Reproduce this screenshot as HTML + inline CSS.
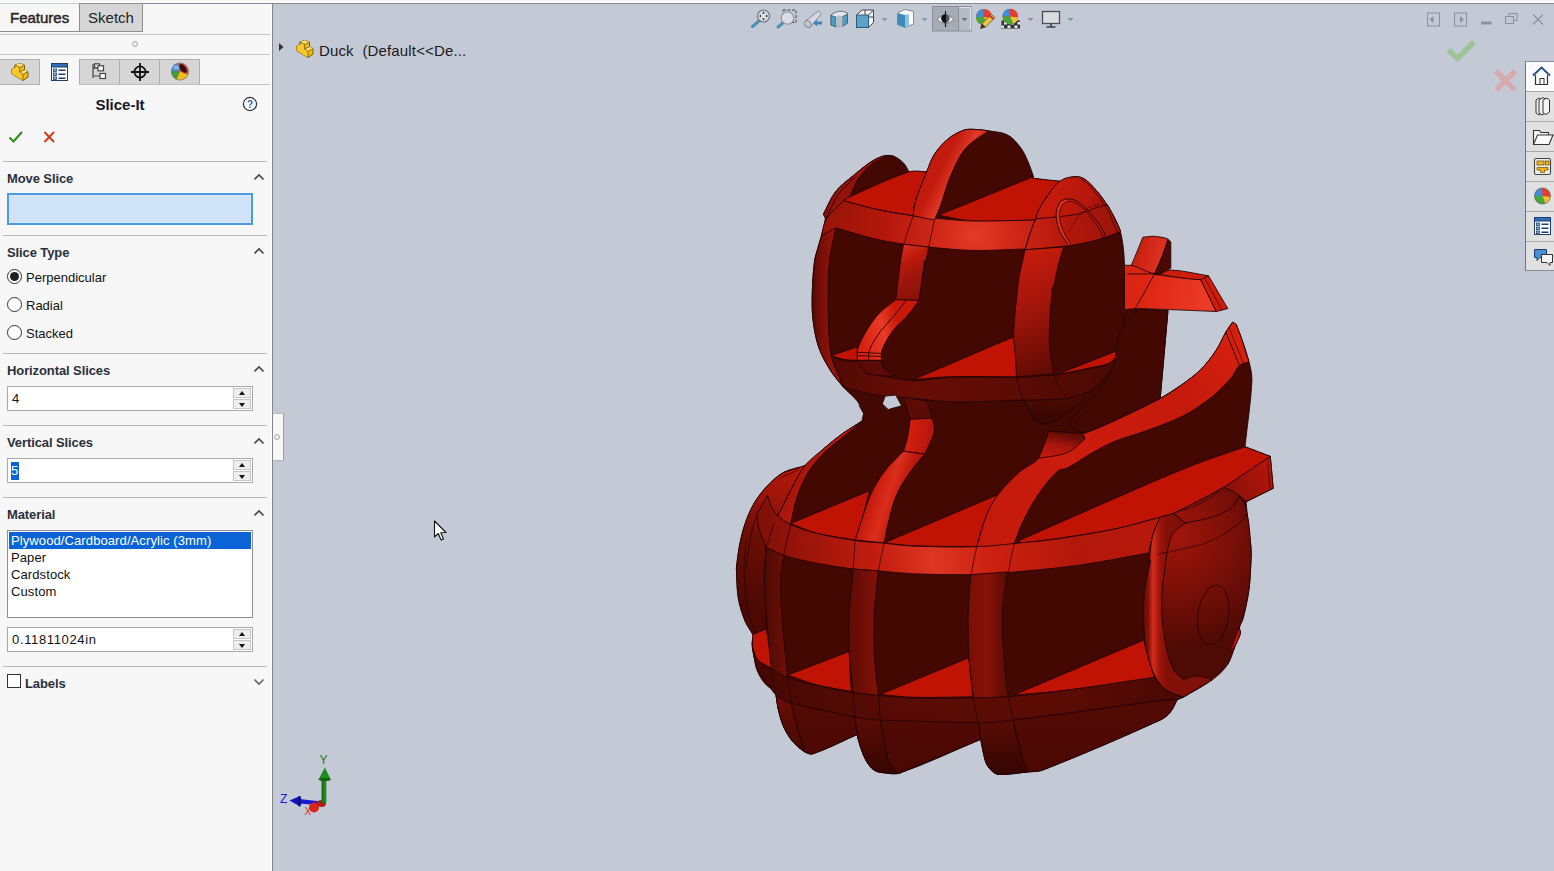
<!DOCTYPE html>
<html><head><meta charset="utf-8"><title>Slice-It</title>
<style>
*{box-sizing:border-box;margin:0;padding:0}
html,body{width:1554px;height:871px;overflow:hidden;background:#c4c9d6;font-family:"Liberation Sans","DejaVu Sans",sans-serif;font-size:13px;color:#111}
#top{position:absolute;left:0;top:0;width:1554px;height:3px;background:#f7f7f6;border-bottom:1px solid #fff}
#topline{position:absolute;left:79px;top:3px;width:1475px;height:1px;background:#85878d}
#panel{position:absolute;left:0;top:4px;width:272px;height:867px;background:#f7f7f7;border-right:1px solid #fff}
#vdiv{position:absolute;left:272px;top:3px;width:1px;height:868px;background:#83868f}
#view{position:absolute;left:273px;top:4px;width:1281px;height:867px;background:#c4c9d6}
.abs{position:absolute}
.hl{position:absolute;height:1px;background:#b9b9b9;left:3px;width:264px}
.sec{position:absolute;left:7px;font-weight:bold;font-size:13px;color:#2b2f3a;letter-spacing:-0.1px}
.chev{position:absolute;left:253px;width:12px;height:8px}
.inp{position:absolute;left:7px;width:246px;height:25px;background:#fff;border:1px solid #a9a9a9;font-size:13px;line-height:23px;padding-left:4px;color:#111}
.spin{position:absolute;right:1px;top:1px;width:18px;height:21px}
.spin i{position:absolute;left:0;width:18px;height:10px;background:#eee;border:1px solid #c6c6c6}
.spin i:after{content:"";position:absolute;left:5px;top:2px;border-left:3.5px solid transparent;border-right:3.5px solid transparent}
.spin i.u{top:0}.spin i.u:after{border-bottom:4px solid #111}
.spin i.d{top:11px}.spin i.d:after{border-top:4px solid #111;top:3px}
.radio{position:absolute;left:7px;width:15px;height:15px;border-radius:50%;border:1px solid #333;background:#fff}
.rl{position:absolute;left:26px;font-size:13px;color:#111}
</style></head><body>
<div id="top"></div><div id="topline"></div>
<div id="panel">
 <!-- tabs -->
 <div class="abs" style="left:0;top:0;width:80px;height:28px;font-size:15px;line-height:27px;padding-left:10px;color:#2a2a2a;-webkit-text-stroke:0.5px #2a2a2a">Features</div>
 <div class="abs" style="left:79px;top:-1px;width:64px;height:29px;background:#d6d6d6;border:1px solid #8e8e8e;font-size:15px;line-height:28px;text-align:center;color:#222">Sketch</div>
 <div class="abs" style="left:0;top:27px;width:143px;height:1px;background:#8e8e8e"></div>
 <div class="abs" style="left:0;top:30px;width:270px;height:1px;background:#c6c6c6"></div>
 <div class="abs" style="left:132px;top:37px;width:6px;height:6px;border-radius:50%;border:1px solid #aaa;background:#eee"></div>
 <div class="abs" style="left:0;top:50px;width:270px;height:1px;background:#c4c4c4"></div>
 <!-- icon tabs -->
 <div class="abs" style="left:0;top:55px;width:40px;height:26px;background:#d6d6d6;border:1px solid #adadad;border-left:0"></div>
 <div class="abs" style="left:79px;top:55px;width:121px;height:26px;background:#d6d6d6;border:1px solid #adadad"></div>
 <div class="abs" style="left:119px;top:55px;width:1px;height:26px;background:#adadad"></div>
 <div class="abs" style="left:159px;top:55px;width:1px;height:26px;background:#adadad"></div>
 <div class="abs" style="left:0;top:80px;width:40px;height:1px;background:#adadad"></div>
 <div class="abs" style="left:79px;top:80px;width:191px;height:1px;background:#c0c0c0"></div>
 <svg class="abs" style="left:0;top:55px" width="200" height="26" viewBox="0 0 200 26">
  <!-- part icon -->
  <g transform="translate(11,4)"><path d="M4 2 L9 0.3 L13.5 2.2 L13.5 6.8 L17 8.6 L17 14 L12 17.5 L0.6 10.6 L0.6 6 L4 4.6 Z" fill="#f0b90f" stroke="#7a5a08" stroke-width="1" stroke-linejoin="round"/><path d="M4 2 L9 0.3 L13.5 2.2 L8.6 4.4 Z" fill="#fbe27a"/><path d="M8.6 8.8 L13.5 6.8 L17 8.6 L12 11.4 Z" fill="#fbe27a"/><path d="M0.6 6 L4 4.6 L4 2 L8.6 4.4 L8.6 8.8 L12 11.4 L12 17.5 L0.6 10.6Z" fill="#f5c92e"/><path d="M4 2 L8.6 4.4 L13.5 2.2 M8.6 4.4 L8.6 8.8 L12 11.4 L17 8.6 M12 11.4 L12 17.5 M8.6 8.8 L13.5 6.8 M4 4.6 L4 2" fill="none" stroke="#7a5a08" stroke-width="0.8"/></g>
  <!-- property manager icon -->
  <g transform="translate(51,4)"><rect x="0.5" y="0.5" width="16" height="17" fill="#fff" stroke="#1d3e6e"/><rect x="0.5" y="0.5" width="16" height="3.5" fill="#2f6fb5" stroke="#1d3e6e"/><rect x="2.5" y="6" width="3" height="2.4" fill="#8ab4e0" stroke="#1d3e6e" stroke-width="0.8"/><rect x="2.5" y="10" width="3" height="2.4" fill="#8ab4e0" stroke="#1d3e6e" stroke-width="0.8"/><rect x="2.5" y="14" width="3" height="2.4" fill="#8ab4e0" stroke="#1d3e6e" stroke-width="0.8"/><path d="M7.5 7.2H14.5M7.5 11.2H14.5M7.5 15.2H14.5" stroke="#1d3e6e" stroke-width="1.4"/></g>
  <!-- config icon -->
  <g transform="translate(92,4)" fill="none" stroke="#444" stroke-width="1.2"><path d="M1 1 V15 M1 5 H6 M1 13 H8"/><rect x="2.5" y="0.8" width="5" height="4" fill="#e8e8e8"/><rect x="6" y="2.8" width="5.5" height="5" fill="#fff"/><rect x="8" y="10.5" width="5.5" height="5" fill="#fff"/></g>
  <!-- crosshair -->
  <g transform="translate(140,13)" fill="none" stroke="#111" stroke-width="1.8"><circle r="5.6"/><path d="M-9 0H9M0 -9V9"/></g>
  <!-- appearance ball -->
  <g transform="translate(180,12.5)"><circle r="8.6" fill="#e23a2c"/><path d="M0 0 L-8.600 -0.500 A8.600 8.600 0 0 1 -2 -8.400 Z" fill="#3b8fdc"/><path d="M0 0 L-8.600 -0.500 A8.600 8.600 0 0 0 -3.500 7.900 Z" fill="#3f9e38"/><path d="M0 0 L-3.500 7.900 A8.600 8.600 0 0 0 8 3.200 Z" fill="#f2bb1c"/><ellipse cx="3" cy="-3" rx="2.700" ry="5" transform="rotate(-35 3 -3)" fill="#3a0d0d"/><ellipse cx="-3.500" cy="-4" rx="3" ry="2" fill="#fff" opacity="0.35"/><circle r="8.600" fill="none" stroke="#777" stroke-width="0.700"/></g>
 </svg>
 <!-- title -->
 <div class="abs" style="left:0;top:91px;width:240px;text-align:center;font-weight:bold;font-size:15px;line-height:20px;color:#16192a">Slice-It</div>
 <svg class="abs" style="left:242px;top:92px" width="16" height="16" viewBox="0 0 16 16"><circle cx="8" cy="8" r="6.6" fill="#fff" stroke="#30333c" stroke-width="1.2"/><text x="8" y="11.6" text-anchor="middle" font-family="Liberation Sans,sans-serif" font-size="10" font-weight="bold" fill="#2f5fae">?</text></svg>
 <svg class="abs" style="left:8px;top:126px" width="52" height="14" viewBox="0 0 52 14"><path d="M1.5 7.5 L5.5 11.5 L14 2" fill="none" stroke="#2f8f1f" stroke-width="2.2"/><path d="M36.5 2 L46 12 M46 2 L36.5 12" fill="none" stroke="#d63a14" stroke-width="1.9"/></svg>
 <div class="hl" style="top:157px"></div>
 <div class="sec" style="top:167px">Move Slice</div>
 <div class="abs" style="left:7px;top:189px;width:246px;height:32px;background:#cfe2f8;border:2px solid #4a9be6;box-shadow:inset 0 0 0 1px #d9e9fa"></div>
 <div class="hl" style="top:231px"></div>
 <div class="sec" style="top:241px">Slice Type</div>
 <div class="radio" style="top:265px"><span class="abs" style="left:2px;top:2px;width:9px;height:9px;border-radius:50%;background:#222"></span></div>
 <div class="rl" style="top:266px">Perpendicular</div>
 <div class="radio" style="top:293px"></div><div class="rl" style="top:294px">Radial</div>
 <div class="radio" style="top:321px"></div><div class="rl" style="top:322px">Stacked</div>
 <div class="hl" style="top:349px"></div>
 <div class="sec" style="top:359px">Horizontal Slices</div>
 <div class="inp" style="top:382px">4<div class="spin"><i class="u"></i><i class="d"></i></div></div>
 <div class="hl" style="top:421px"></div>
 <div class="sec" style="top:431px">Vertical Slices</div>
 <div class="inp" style="top:454px"><span style="background:#0a64d8;color:#fff;display:inline-block;height:18px;line-height:18px;margin-top:2px;padding:0 1px 0 0;margin-left:-1px">5</span><div class="spin"><i class="u"></i><i class="d"></i></div></div>
 <div class="hl" style="top:493px"></div>
 <div class="sec" style="top:503px">Material</div>
 <div class="abs" style="left:7px;top:526px;width:246px;height:88px;background:#fff;border:1px solid #8f8f8f;font-size:13px;line-height:17px;color:#111;padding:1px;letter-spacing:0.1px">
   <div style="background:#0a64d8;color:#fff;padding-left:2px;height:17px">Plywood/Cardboard/Acrylic (3mm)</div>
   <div style="padding-left:2px">Paper</div><div style="padding-left:2px">Cardstock</div><div style="padding-left:2px">Custom</div>
 </div>
 <div class="inp" style="top:623px;letter-spacing:0.65px">0.11811024in<div class="spin"><i class="u"></i><i class="d"></i></div></div>
 <div class="hl" style="top:662px"></div>
 <div class="abs" style="left:7px;top:670px;width:14px;height:14px;border:1px solid #333;background:#fff"></div>
 <div class="sec" style="left:25px;top:672px">Labels</div>
 <!-- chevrons -->
 <svg class="chev" style="top:169px" viewBox="0 0 12 8"><path d="M1.5 6.5 L6 2 L10.5 6.5" fill="none" stroke="#444" stroke-width="1.6"/></svg>
 <svg class="chev" style="top:243px" viewBox="0 0 12 8"><path d="M1.5 6.5 L6 2 L10.5 6.5" fill="none" stroke="#444" stroke-width="1.6"/></svg>
 <svg class="chev" style="top:361px" viewBox="0 0 12 8"><path d="M1.5 6.5 L6 2 L10.5 6.5" fill="none" stroke="#444" stroke-width="1.6"/></svg>
 <svg class="chev" style="top:433px" viewBox="0 0 12 8"><path d="M1.5 6.5 L6 2 L10.5 6.5" fill="none" stroke="#444" stroke-width="1.6"/></svg>
 <svg class="chev" style="top:505px" viewBox="0 0 12 8"><path d="M1.5 6.5 L6 2 L10.5 6.5" fill="none" stroke="#444" stroke-width="1.6"/></svg>
 <svg class="chev" style="top:674px" viewBox="0 0 12 8"><path d="M1.5 1.5 L6 6 L10.5 1.5" fill="none" stroke="#666" stroke-width="1.6"/></svg>
</div>
<div id="vdiv"></div>
<div id="view"></div>
<svg id="duck" style="position:absolute;left:0;top:0" width="1554" height="871" viewBox="0 0 1554 871"><defs><clipPath id="cpBody"><path d="M859.0 405.8L863.8 412.5L861.9 421.2C855.8 425.1 849.5 428.6 843.6 432.8C836.9 437.6 830.5 442.9 824.2 448.3C817.6 453.9 812.3 461.2 804.9 465.6C798.5 469.4 790.3 468.9 783.7 472.4C777.9 475.5 772.9 480.2 768.3 484.9C763.2 490.2 758.5 496.0 754.7 502.3C750.7 509.0 747.7 516.2 745.1 523.6C742.5 531.1 740.8 538.9 739.3 546.7C737.9 553.7 737.3 560.9 736.4 568.0C736.4 568.3 736.4 568.7 736.4 569.0C737.0 578.6 736.7 588.4 738.3 597.9C739.6 605.8 742.1 613.6 745.1 621.1C747.0 625.9 751.3 629.6 752.8 634.6C753.7 637.7 751.7 641.0 751.9 644.2C752.1 648.1 753.0 652.0 753.8 655.8C754.9 661.0 755.7 666.3 757.6 671.3C759.2 675.5 761.5 679.5 764.4 682.9C767.7 686.7 772.1 689.3 776.0 692.5C776.0 693.0 775.9 693.6 776.0 694.1C776.6 698.6 776.9 703.2 777.9 707.6C779.4 714.1 781.0 720.8 783.7 726.9C786.2 732.4 789.5 737.7 793.4 742.3C796.6 746.1 800.6 749.4 804.9 752.0C807.2 753.4 810.2 754.7 812.7 753.9C828.0 748.8 842.3 741.0 857.1 734.6C858.4 739.1 859.3 743.7 860.9 748.1C862.5 752.7 864.2 757.4 866.7 761.6C868.7 764.9 871.1 768.2 874.4 770.3C877.2 772.1 880.8 772.4 884.1 772.8C889.2 773.4 894.6 774.9 899.5 773.2C927.2 763.6 953.6 750.7 980.6 739.4C981.9 744.9 982.8 750.5 984.5 755.8C986.0 760.5 987.4 765.4 990.3 769.3C992.1 771.8 995.4 772.6 998.0 774.2C998.2 774.3 998.4 774.5 998.6 774.5C1008.3 773.8 1017.9 773.0 1027.6 772.0C1032.8 771.5 1038.2 771.9 1043.0 770.0C1082.7 754.4 1121.9 737.5 1160.8 719.8C1164.5 718.1 1167.8 715.3 1170.4 712.1C1173.4 708.4 1174.9 703.8 1177.2 699.6C1179.4 698.6 1181.8 698.0 1183.9 696.7C1193.1 691.2 1202.7 686.1 1211.0 679.3C1217.7 673.8 1222.5 666.4 1228.3 660.0L1227.8 664.2C1230.4 657.8 1232.9 651.3 1235.5 644.9C1237.1 641.1 1239.4 637.5 1240.3 633.4C1240.7 631.5 1239.0 629.5 1239.4 627.6C1240.0 624.2 1242.4 621.3 1243.2 617.9C1245.6 608.4 1247.7 598.7 1249.0 589.0C1250.3 579.4 1250.5 569.7 1251.0 560.0C1251.2 556.0 1251.3 552.1 1251.0 548.1C1250.0 536.5 1248.3 525.0 1247.1 513.4C1246.7 509.5 1246.4 505.7 1246.1 501.8L1273.2 488.3L1270.3 456.4L1245.2 446.8C1245.2 446.1 1245.1 445.5 1245.2 444.8C1247.4 423.6 1250.9 402.4 1251.9 381.1C1252.2 374.6 1250.7 368.1 1249.0 361.8C1245.6 349.3 1241.4 337.0 1236.5 325.1C1235.9 323.6 1233.9 323.2 1232.6 322.2C1230.4 325.4 1227.9 328.5 1225.9 331.9C1222.4 337.9 1220.0 344.5 1216.2 350.2C1211.6 357.0 1206.6 363.7 1200.8 369.5C1195.0 375.3 1188.2 380.1 1181.5 384.9C1174.6 389.8 1167.3 394.0 1160.2 398.5L1168.0 310.6C1158.3 309.9 1148.7 308.8 1139.0 308.6C1134.2 308.5 1129.3 309.3 1124.5 309.6C1122.9 317.3 1121.2 325.1 1119.7 332.8C1117.7 343.1 1117.7 353.9 1113.9 363.7C1109.8 374.2 1103.3 383.7 1096.5 392.7C1091.0 399.9 1083.3 405.3 1077.2 412.0C1070.4 419.4 1064.3 427.4 1057.9 435.1C1014.2 423.7 970.6 411.6 926.7 400.9C919.1 399.1 911.3 398.6 903.6 397.5L901.6 405.8C897.1 407.1 892.7 408.8 888.1 409.6C879.8 411.0 871.4 411.5 863.0 412.5L859.0 405.8Z"/></clipPath><linearGradient id="gHL" gradientUnits="userSpaceOnUse" x1="812" y1="300" x2="832" y2="300"><stop offset="0" stop-color="#560a04"/><stop offset="0.6" stop-color="#7e1008"/><stop offset="1" stop-color="#92130a"/></linearGradient><linearGradient id="gB3t" gradientUnits="userSpaceOnUse" x1="1050" y1="200" x2="1120" y2="230"><stop offset="0" stop-color="#c41a0c"/><stop offset="0.5" stop-color="#b5160b"/><stop offset="1" stop-color="#7a0f07"/></linearGradient><radialGradient id="gH1" gradientUnits="userSpaceOnUse" cx="975" cy="235" r="150"><stop offset="0" stop-color="#e33b29"/><stop offset="0.25" stop-color="#d02818"/><stop offset="0.6" stop-color="#b5170b"/><stop offset="1" stop-color="#98140a"/></radialGradient><linearGradient id="gB2h" gradientUnits="userSpaceOnUse" x1="925" y1="200" x2="955" y2="215"><stop offset="0" stop-color="#c21a0c"/><stop offset="0.5" stop-color="#e23a28"/><stop offset="1" stop-color="#c41a0c"/></linearGradient><linearGradient id="gB2m" gradientUnits="userSpaceOnUse" x1="900" y1="246" x2="926" y2="296"><stop offset="0" stop-color="#d8301e"/><stop offset="0.3" stop-color="#bc190c"/><stop offset="0.6" stop-color="#9e150a"/><stop offset="1" stop-color="#861108"/></linearGradient><linearGradient id="gBk" gradientUnits="userSpaceOnUse" x1="860" y1="340" x2="900" y2="330"><stop offset="0" stop-color="#d8200f"/><stop offset="0.6" stop-color="#e83a26"/><stop offset="1" stop-color="#c81808"/></linearGradient><linearGradient id="gB3h" gradientUnits="userSpaceOnUse" x1="1020" y1="255" x2="1062" y2="365"><stop offset="0" stop-color="#c41b0c"/><stop offset="0.4" stop-color="#a8160b"/><stop offset="0.8" stop-color="#7a0f07"/><stop offset="1" stop-color="#620c05"/></linearGradient><linearGradient id="gH2" gradientUnits="userSpaceOnUse" x1="830" y1="380" x2="1110" y2="380"><stop offset="0" stop-color="#520a04"/><stop offset="0.3" stop-color="#660d05"/><stop offset="0.6" stop-color="#5e0c05"/><stop offset="1" stop-color="#4a0903"/></linearGradient><linearGradient id="gCap" gradientUnits="userSpaceOnUse" x1="1040" y1="400" x2="1040" y2="425"><stop offset="0" stop-color="#4a0a04"/><stop offset="1" stop-color="#330503"/></linearGradient><linearGradient id="gTv" gradientUnits="userSpaceOnUse" x1="1130" y1="250" x2="1165" y2="260"><stop offset="0" stop-color="#c41a0c"/><stop offset="1" stop-color="#e03523"/></linearGradient><linearGradient id="gTh" gradientUnits="userSpaceOnUse" x1="1140" y1="290" x2="1220" y2="300"><stop offset="0" stop-color="#dc2412"/><stop offset="1" stop-color="#ee3f2a"/></linearGradient><linearGradient id="gWL" gradientUnits="userSpaceOnUse" x1="792" y1="462" x2="738" y2="600"><stop offset="0" stop-color="#b8180b"/><stop offset="0.3" stop-color="#9a1409"/><stop offset="0.55" stop-color="#6c0e06"/><stop offset="1" stop-color="#4c0903"/></linearGradient><linearGradient id="gB1a" gradientUnits="userSpaceOnUse" x1="780" y1="520" x2="800" y2="530"><stop offset="0" stop-color="#a8160b"/><stop offset="1" stop-color="#c41a0c"/></linearGradient><linearGradient id="gN1" gradientUnits="userSpaceOnUse" x1="905" y1="440" x2="930" y2="445"><stop offset="0" stop-color="#d8200f"/><stop offset="1" stop-color="#b5160b"/></linearGradient><linearGradient id="gB2a" gradientUnits="userSpaceOnUse" x1="870" y1="500" x2="900" y2="510"><stop offset="0" stop-color="#c41a0c"/><stop offset="0.5" stop-color="#dc2e1c"/><stop offset="1" stop-color="#b5160b"/></linearGradient><linearGradient id="gSl" gradientUnits="userSpaceOnUse" x1="1230" y1="490" x2="1272" y2="470"><stop offset="0" stop-color="#8a1108"/><stop offset="1" stop-color="#b5160b"/></linearGradient><linearGradient id="gB3a" gradientUnits="userSpaceOnUse" x1="1010" y1="520" x2="1240" y2="330"><stop offset="0" stop-color="#c41a0c"/><stop offset="0.3" stop-color="#cc1c0d"/><stop offset="0.7" stop-color="#c41a0c"/><stop offset="1" stop-color="#d8200f"/></linearGradient><linearGradient id="gFil" gradientUnits="userSpaceOnUse" x1="1060" y1="432" x2="1055" y2="458"><stop offset="0" stop-color="#5a0b05"/><stop offset="0.5" stop-color="#a5150a"/><stop offset="1" stop-color="#c41a0c"/></linearGradient><linearGradient id="gH3" gradientUnits="userSpaceOnUse" x1="755" y1="560" x2="1160" y2="540"><stop offset="0" stop-color="#7a0f07"/><stop offset="0.12" stop-color="#9a140a"/><stop offset="0.3" stop-color="#c21d0e"/><stop offset="0.44" stop-color="#de3624"/><stop offset="0.58" stop-color="#cc2010"/><stop offset="0.8" stop-color="#b2170b"/><stop offset="1" stop-color="#b8180b"/></linearGradient><radialGradient id="gWR" gradientUnits="userSpaceOnUse" cx="1175" cy="535" r="115"><stop offset="0" stop-color="#a2150a"/><stop offset="0.45" stop-color="#7e1008"/><stop offset="1" stop-color="#4e0a04"/></radialGradient><linearGradient id="gWRr" gradientUnits="userSpaceOnUse" x1="1148" y1="560" x2="1168" y2="560"><stop offset="0" stop-color="#7a0f07"/><stop offset="0.25" stop-color="#d42a1a"/><stop offset="0.6" stop-color="#9a1409"/><stop offset="1" stop-color="#801008"/></linearGradient><linearGradient id="gB1b" gradientUnits="userSpaceOnUse" x1="765" y1="620" x2="785" y2="620"><stop offset="0" stop-color="#4e0a04"/><stop offset="1" stop-color="#6c0e06"/></linearGradient><linearGradient id="gB2b" gradientUnits="userSpaceOnUse" x1="850" y1="600" x2="878" y2="600"><stop offset="0" stop-color="#5e0c05"/><stop offset="1" stop-color="#841108"/></linearGradient><linearGradient id="gB3b" gradientUnits="userSpaceOnUse" x1="970" y1="600" x2="1005" y2="600"><stop offset="0" stop-color="#7a0f07"/><stop offset="0.5" stop-color="#8a1108"/><stop offset="1" stop-color="#5e0c05"/></linearGradient><linearGradient id="gLeg" gradientUnits="userSpaceOnUse" x1="0" y1="700" x2="0" y2="774"><stop offset="0" stop-color="#6a0d06"/><stop offset="0.5" stop-color="#540b04"/><stop offset="1" stop-color="#3a0602"/></linearGradient><linearGradient id="gH4" gradientUnits="userSpaceOnUse" x1="760" y1="700" x2="1180" y2="700"><stop offset="0" stop-color="#460803"/><stop offset="0.3" stop-color="#5a0b05"/><stop offset="0.7" stop-color="#5e0c05"/><stop offset="1" stop-color="#4a0803"/></linearGradient><linearGradient id="gShade" gradientUnits="userSpaceOnUse" x1="0" y1="690" x2="0" y2="775"><stop offset="0" stop-color="#200000" stop-opacity="0"/><stop offset="1" stop-color="#200000" stop-opacity="0.18"/></linearGradient></defs>
<path d="M859.0 405.8L863.8 412.5L861.9 421.2C855.8 425.1 849.5 428.6 843.6 432.8C836.9 437.6 830.5 442.9 824.2 448.3C817.6 453.9 812.3 461.2 804.9 465.6C798.5 469.4 790.3 468.9 783.7 472.4C777.9 475.5 772.9 480.2 768.3 484.9C763.2 490.2 758.5 496.0 754.7 502.3C750.7 509.0 747.7 516.2 745.1 523.6C742.5 531.1 740.8 538.9 739.3 546.7C737.9 553.7 737.3 560.9 736.4 568.0C736.4 568.3 736.4 568.7 736.4 569.0C737.0 578.6 736.7 588.4 738.3 597.9C739.6 605.8 742.1 613.6 745.1 621.1C747.0 625.9 751.3 629.6 752.8 634.6C753.7 637.7 751.7 641.0 751.9 644.2C752.1 648.1 753.0 652.0 753.8 655.8C754.9 661.0 755.7 666.3 757.6 671.3C759.2 675.5 761.5 679.5 764.4 682.9C767.7 686.7 772.1 689.3 776.0 692.5C776.0 693.0 775.9 693.6 776.0 694.1C776.6 698.6 776.9 703.2 777.9 707.6C779.4 714.1 781.0 720.8 783.7 726.9C786.2 732.4 789.5 737.7 793.4 742.3C796.6 746.1 800.6 749.4 804.9 752.0C807.2 753.4 810.2 754.7 812.7 753.9C828.0 748.8 842.3 741.0 857.1 734.6C858.4 739.1 859.3 743.7 860.9 748.1C862.5 752.7 864.2 757.4 866.7 761.6C868.7 764.9 871.1 768.2 874.4 770.3C877.2 772.1 880.8 772.4 884.1 772.8C889.2 773.4 894.6 774.9 899.5 773.2C927.2 763.6 953.6 750.7 980.6 739.4C981.9 744.9 982.8 750.5 984.5 755.8C986.0 760.5 987.4 765.4 990.3 769.3C992.1 771.8 995.4 772.6 998.0 774.2C998.2 774.3 998.4 774.5 998.6 774.5C1008.3 773.8 1017.9 773.0 1027.6 772.0C1032.8 771.5 1038.2 771.9 1043.0 770.0C1082.7 754.4 1121.9 737.5 1160.8 719.8C1164.5 718.1 1167.8 715.3 1170.4 712.1C1173.4 708.4 1174.9 703.8 1177.2 699.6C1179.4 698.6 1181.8 698.0 1183.9 696.7C1193.1 691.2 1202.7 686.1 1211.0 679.3C1217.7 673.8 1222.5 666.4 1228.3 660.0L1227.8 664.2C1230.4 657.8 1232.9 651.3 1235.5 644.9C1237.1 641.1 1239.4 637.5 1240.3 633.4C1240.7 631.5 1239.0 629.5 1239.4 627.6C1240.0 624.2 1242.4 621.3 1243.2 617.9C1245.6 608.4 1247.7 598.7 1249.0 589.0C1250.3 579.4 1250.5 569.7 1251.0 560.0C1251.2 556.0 1251.3 552.1 1251.0 548.1C1250.0 536.5 1248.3 525.0 1247.1 513.4C1246.7 509.5 1246.4 505.7 1246.1 501.8L1273.2 488.3L1270.3 456.4L1245.2 446.8C1245.2 446.1 1245.1 445.5 1245.2 444.8C1247.4 423.6 1250.9 402.4 1251.9 381.1C1252.2 374.6 1250.7 368.1 1249.0 361.8C1245.6 349.3 1241.4 337.0 1236.5 325.1C1235.9 323.6 1233.9 323.2 1232.6 322.2C1230.4 325.4 1227.9 328.5 1225.9 331.9C1222.4 337.9 1220.0 344.5 1216.2 350.2C1211.6 357.0 1206.6 363.7 1200.8 369.5C1195.0 375.3 1188.2 380.1 1181.5 384.9C1174.6 389.8 1167.3 394.0 1160.2 398.5L1168.0 310.6C1158.3 309.9 1148.7 308.8 1139.0 308.6C1134.2 308.5 1129.3 309.3 1124.5 309.6C1122.9 317.3 1121.2 325.1 1119.7 332.8C1117.7 343.1 1117.7 353.9 1113.9 363.7C1109.8 374.2 1103.3 383.7 1096.5 392.7C1091.0 399.9 1083.3 405.3 1077.2 412.0C1070.4 419.4 1064.3 427.4 1057.9 435.1C1014.2 423.7 970.6 411.6 926.7 400.9C919.1 399.1 911.3 398.6 903.6 397.5L901.6 405.8C897.1 407.1 892.7 408.8 888.1 409.6C879.8 411.0 871.4 411.5 863.0 412.5L859.0 405.8Z" fill="#430802"/>
<path d="M863.0 412.5C861.1 408.6 859.8 404.3 857.2 400.9C853.3 395.9 847.9 392.2 843.7 387.4C838.9 381.9 834.1 376.2 830.2 370.0C825.7 362.7 821.3 355.1 818.6 346.9C815.5 337.5 813.8 327.7 812.8 317.9C811.8 308.3 812.1 298.6 812.4 289.0C812.7 279.3 813.4 269.6 814.7 260.0C815.2 256.2 816.6 252.7 817.6 249.0C818.9 244.5 820.3 240.0 821.5 235.5C822.9 230.1 824.9 224.7 825.4 219.1C825.6 217.3 824.1 215.8 823.4 214.2C827.6 206.5 830.6 198.0 836.0 191.1C840.8 185.0 847.4 180.6 853.4 175.6C859.0 170.9 864.5 166.1 870.7 162.1C874.9 159.4 879.4 157.0 884.2 155.8C887.3 155.0 890.9 155.2 893.9 156.3C897.6 157.7 900.8 160.3 903.6 163.1C906.0 165.5 907.2 168.9 909.0 171.8L926.7 171.8C929.3 166.0 930.9 159.7 934.4 154.4C938.1 148.7 942.7 143.4 948.0 139.0C952.5 135.2 957.9 132.4 963.4 130.3C966.4 129.1 969.9 129.2 973.1 129.3C978.3 129.4 983.4 129.9 988.5 130.8C995.0 131.9 1002.0 132.0 1007.8 135.1C1013.4 138.1 1017.5 143.5 1021.3 148.6C1024.7 153.3 1026.7 158.8 1029.0 164.1C1030.8 168.2 1032.0 172.4 1033.5 176.6L1032.8 178.3C1041.8 179.3 1050.8 181.5 1059.8 181.2C1063.9 181.1 1067.3 177.5 1071.4 177.0C1075.2 176.5 1079.4 176.4 1082.8 178.1C1087.3 180.3 1090.7 184.4 1094.2 188.0C1097.6 191.6 1100.7 195.5 1103.5 199.6C1106.8 204.4 1109.9 209.3 1112.7 214.4C1115.3 219.2 1118.0 224.1 1119.7 229.3C1121.4 234.5 1122.2 239.9 1123.0 245.3C1123.7 250.3 1124.1 255.4 1124.3 260.4C1124.6 265.5 1124.6 270.7 1124.5 275.8C1124.3 293.2 1123.9 310.6 1123.6 328.0C1122.3 329.6 1120.3 330.8 1119.7 332.8C1117.7 339.0 1117.0 345.6 1115.8 352.1C1115.1 356.0 1115.6 360.2 1113.9 363.7C1109.1 373.9 1103.3 383.7 1096.5 392.7C1091.0 399.9 1083.2 405.1 1077.2 412.0C1074.1 415.5 1071.8 419.5 1069.5 423.6C1065.3 431.1 1061.8 439.0 1057.9 446.7L863.0 412.5Z" fill="#430802"/>
<path d="M859.0 405.8L863.8 412.5L861.9 421.2C855.8 425.1 849.5 428.6 843.6 432.8C836.9 437.6 830.5 442.9 824.2 448.3C817.6 453.9 812.3 461.2 804.9 465.6C798.5 469.4 790.3 468.9 783.7 472.4C777.9 475.5 772.9 480.2 768.3 484.9C763.2 490.2 758.5 496.0 754.7 502.3C750.7 509.0 747.7 516.2 745.1 523.6C742.5 531.1 740.8 538.9 739.3 546.7C737.9 553.7 737.3 560.9 736.4 568.0C736.4 568.3 736.4 568.7 736.4 569.0C737.0 578.6 736.7 588.4 738.3 597.9C739.6 605.8 742.1 613.6 745.1 621.1C747.0 625.9 751.3 629.6 752.8 634.6C753.7 637.7 751.7 641.0 751.9 644.2C752.1 648.1 753.0 652.0 753.8 655.8C754.9 661.0 755.7 666.3 757.6 671.3C759.2 675.5 761.5 679.5 764.4 682.9C767.7 686.7 772.1 689.3 776.0 692.5C776.0 693.0 775.9 693.6 776.0 694.1C776.6 698.6 776.9 703.2 777.9 707.6C779.4 714.1 781.0 720.8 783.7 726.9C786.2 732.4 789.5 737.7 793.4 742.3C796.6 746.1 800.6 749.4 804.9 752.0C807.2 753.4 810.2 754.7 812.7 753.9C828.0 748.8 842.3 741.0 857.1 734.6C858.4 739.1 859.3 743.7 860.9 748.1C862.5 752.7 864.2 757.4 866.7 761.6C868.7 764.9 871.1 768.2 874.4 770.3C877.2 772.1 880.8 772.4 884.1 772.8C889.2 773.4 894.6 774.9 899.5 773.2C927.2 763.6 953.6 750.7 980.6 739.4C981.9 744.9 982.8 750.5 984.5 755.8C986.0 760.5 987.4 765.4 990.3 769.3C992.1 771.8 995.4 772.6 998.0 774.2C998.2 774.3 998.4 774.5 998.6 774.5C1008.3 773.8 1017.9 773.0 1027.6 772.0C1032.8 771.5 1038.2 771.9 1043.0 770.0C1082.7 754.4 1121.9 737.5 1160.8 719.8C1164.5 718.1 1167.8 715.3 1170.4 712.1C1173.4 708.4 1174.9 703.8 1177.2 699.6C1179.4 698.6 1181.8 698.0 1183.9 696.7C1193.1 691.2 1202.7 686.1 1211.0 679.3C1217.7 673.8 1222.5 666.4 1228.3 660.0L1227.8 664.2C1230.4 657.8 1232.9 651.3 1235.5 644.9C1237.1 641.1 1239.4 637.5 1240.3 633.4C1240.7 631.5 1239.0 629.5 1239.4 627.6C1240.0 624.2 1242.4 621.3 1243.2 617.9C1245.6 608.4 1247.7 598.7 1249.0 589.0C1250.3 579.4 1250.5 569.7 1251.0 560.0C1251.2 556.0 1251.3 552.1 1251.0 548.1C1250.0 536.5 1248.3 525.0 1247.1 513.4C1246.7 509.5 1246.4 505.7 1246.1 501.8L1273.2 488.3L1270.3 456.4L1245.2 446.8C1245.2 446.1 1245.1 445.5 1245.2 444.8C1247.4 423.6 1250.9 402.4 1251.9 381.1C1252.2 374.6 1250.7 368.1 1249.0 361.8C1245.6 349.3 1241.4 337.0 1236.5 325.1C1235.9 323.6 1233.9 323.2 1232.6 322.2C1230.4 325.4 1227.9 328.5 1225.9 331.9C1222.4 337.9 1220.0 344.5 1216.2 350.2C1211.6 357.0 1206.6 363.7 1200.8 369.5C1195.0 375.3 1188.2 380.1 1181.5 384.9C1174.6 389.8 1167.3 394.0 1160.2 398.5L1168.0 310.6" fill="none" stroke="#230403" stroke-width="0.9"/>
<path d="M863.0 412.5C861.1 408.6 859.8 404.3 857.2 400.9C853.3 395.9 847.9 392.2 843.7 387.4C838.9 381.9 834.1 376.2 830.2 370.0C825.7 362.7 821.3 355.1 818.6 346.9C815.5 337.5 813.8 327.7 812.8 317.9C811.8 308.3 812.1 298.6 812.4 289.0C812.7 279.3 813.4 269.6 814.7 260.0C815.2 256.2 816.6 252.7 817.6 249.0C818.9 244.5 820.3 240.0 821.5 235.5C822.9 230.1 824.9 224.7 825.4 219.1C825.6 217.3 824.1 215.8 823.4 214.2C827.6 206.5 830.6 198.0 836.0 191.1C840.8 185.0 847.4 180.6 853.4 175.6C859.0 170.9 864.5 166.1 870.7 162.1C874.9 159.4 879.4 157.0 884.2 155.8C887.3 155.0 890.9 155.2 893.9 156.3C897.6 157.7 900.8 160.3 903.6 163.1C906.0 165.5 907.2 168.9 909.0 171.8L926.7 171.8C929.3 166.0 930.9 159.7 934.4 154.4C938.1 148.7 942.7 143.4 948.0 139.0C952.5 135.2 957.9 132.4 963.4 130.3C966.4 129.1 969.9 129.2 973.1 129.3C978.3 129.4 983.4 129.9 988.5 130.8C995.0 131.9 1002.0 132.0 1007.8 135.1C1013.4 138.1 1017.5 143.5 1021.3 148.6C1024.7 153.3 1026.7 158.8 1029.0 164.1C1030.8 168.2 1032.0 172.4 1033.5 176.6L1032.8 178.3C1041.8 179.3 1050.8 181.5 1059.8 181.2C1063.9 181.1 1067.3 177.5 1071.4 177.0C1075.2 176.5 1079.4 176.4 1082.8 178.1C1087.3 180.3 1090.7 184.4 1094.2 188.0C1097.6 191.6 1100.7 195.5 1103.5 199.6C1106.8 204.4 1109.9 209.3 1112.7 214.4C1115.3 219.2 1118.0 224.1 1119.7 229.3C1121.4 234.5 1122.2 239.9 1123.0 245.3C1123.7 250.3 1124.1 255.4 1124.3 260.4C1124.6 265.5 1124.6 270.7 1124.5 275.8C1124.3 293.2 1123.9 310.6 1123.6 328.0C1122.3 329.6 1120.3 330.8 1119.7 332.8C1117.7 339.0 1117.0 345.6 1115.8 352.1C1115.1 356.0 1115.6 360.2 1113.9 363.7C1109.1 373.9 1103.3 383.7 1096.5 392.7C1091.0 399.9 1083.2 405.1 1077.2 412.0C1074.1 415.5 1072.1 419.7 1069.5 423.6" fill="none" stroke="#230403" stroke-width="0.9"/>
<path d="M823.4 214.2C827.6 206.5 830.6 198.0 836.0 191.1C840.8 185.0 847.4 180.6 853.4 175.6C859.0 170.9 864.5 166.1 870.7 162.1C874.9 159.4 879.4 157.0 884.2 155.8C887.3 155.0 890.7 156.1 893.9 156.3C890.7 156.7 887.3 156.4 884.2 157.5C879.4 159.3 874.6 161.7 870.7 165.0C865.5 169.4 861.0 174.8 857.2 180.5C853.9 185.5 852.9 191.9 849.5 196.9C848.2 198.8 845.6 199.4 843.7 200.7C841.1 209.7 838.3 218.7 836.0 227.8C833.8 236.7 831.6 245.7 830.2 254.8C829.0 262.5 828.7 270.3 828.3 278.0C828.1 281.7 828.3 285.3 828.3 289.0C828.3 298.6 827.9 308.3 828.3 317.9C828.8 330.5 828.5 343.3 831.2 355.6C833.7 366.7 839.5 376.8 843.7 387.4C839.2 381.6 834.1 376.2 830.2 370.0C825.7 362.7 821.3 355.1 818.6 346.9C815.5 337.5 813.8 327.7 812.8 317.9C811.8 308.3 812.1 298.6 812.4 289.0C812.7 279.3 813.4 269.6 814.7 260.0C815.2 256.2 816.6 252.7 817.6 249.0C818.9 244.5 820.3 240.0 821.5 235.5C822.9 230.1 824.9 224.7 825.4 219.1C825.6 217.3 824.1 215.8 823.4 214.2Z" fill="url(#gHL)" stroke="#230403" stroke-width="0.9" stroke-linejoin="round"/>
<path d="M826.3 218.1C830.2 210.4 833.0 202.0 837.9 194.9C842.4 188.4 848.8 183.4 854.3 177.6" fill="none" stroke="#230403" stroke-width="0.9"/>
<path d="M849.5 196.9C869.2 188.2 888.5 178.5 909.0 171.8C914.6 170.0 920.8 171.8 926.7 171.8C922.8 182.1 918.3 192.2 915.1 202.7C913.8 206.9 913.8 211.4 913.2 215.8C901.0 213.7 888.6 212.0 876.5 209.4C865.4 207.0 854.6 203.6 843.7 200.7C845.6 199.4 847.4 197.8 849.5 196.9Z" fill="#c01304" stroke="#230403" stroke-width="0.9" stroke-linejoin="round"/>
<path d="M938.3 215.2L1033.5 176.6L1032.8 178.3L1059.8 181.2C1056.0 185.7 1051.8 189.9 1048.3 194.7C1044.7 199.6 1041.4 204.8 1038.6 210.2C1037.2 212.9 1036.8 216.0 1035.7 218.9C1035.5 219.3 1035.1 219.6 1034.8 220.0C1014.2 220.3 993.6 222.0 973.1 221.0C961.4 220.4 949.9 217.1 938.3 215.2Z" fill="#c01304" stroke="#230403" stroke-width="0.9" stroke-linejoin="round"/>
<path d="M1059.8 181.2C1063.1 178.7 1067.3 177.5 1071.4 177.0C1075.2 176.5 1079.4 176.4 1082.8 178.1C1087.3 180.3 1090.7 184.4 1094.2 188.0C1097.6 191.6 1100.7 195.5 1103.5 199.6C1106.8 204.4 1109.9 209.3 1112.7 214.4C1115.3 219.2 1117.4 224.3 1119.7 229.3C1120.1 230.1 1120.4 231.0 1120.7 231.8C1116.5 233.3 1112.3 234.9 1108.1 236.3C1103.0 238.0 1097.9 239.9 1092.7 241.1C1084.4 243.1 1076.0 244.2 1067.6 245.9C1066.3 246.2 1065.0 246.6 1063.7 246.9L1035.7 218.9C1036.7 216.0 1037.2 212.9 1038.6 210.2C1041.4 204.8 1044.7 199.6 1048.3 194.7C1051.8 189.9 1055.1 184.8 1059.8 181.2Z" fill="url(#gB3t)" stroke="#230403" stroke-width="0.9" stroke-linejoin="round"/>
<path d="M826.3 219.1C830.8 212.0 837.9 206.8 843.7 200.7C854.6 203.6 865.4 207.0 876.5 209.4C888.6 212.0 900.9 214.0 913.2 215.8C920.2 216.9 927.3 217.5 934.4 218.1C947.3 219.2 960.2 220.8 973.1 221.0C993.7 221.4 1014.2 220.3 1034.8 220.0L1035.7 218.9C1049.5 217.3 1063.5 216.8 1077.2 214.1C1085.2 212.5 1092.6 208.7 1100.4 206.3C1102.8 205.6 1105.3 205.3 1107.7 204.8C1109.4 208.0 1111.1 211.2 1112.7 214.4C1115.1 219.3 1117.4 224.3 1119.7 229.3C1120.1 230.1 1120.4 231.0 1120.7 231.8C1116.5 233.3 1112.3 234.9 1108.1 236.3C1103.0 238.0 1097.9 239.9 1092.7 241.1C1084.4 243.1 1076.0 244.8 1067.6 245.9C1053.5 247.7 1039.3 248.5 1025.1 249.8L1025.2 249.0C1007.8 249.5 990.5 250.8 973.1 250.5C958.2 250.2 943.4 248.4 928.6 247.1C920.2 246.3 911.9 245.5 903.6 244.2C893.2 242.6 882.9 240.9 872.7 238.4C860.3 235.4 848.2 231.3 836.0 227.8L821.5 235.5C823.1 230.0 823.2 223.9 826.3 219.1Z" fill="url(#gH1)" stroke="#230403" stroke-width="0.9" stroke-linejoin="round"/>
<path d="M1067.9 244.2C1065.6 240.8 1062.8 237.6 1061.0 233.9C1059.2 230.3 1057.8 226.4 1057.0 222.4C1056.2 218.6 1055.9 214.7 1056.4 210.9C1056.9 207.7 1058.7 204.8 1059.9 201.7L1066.7 198.9L1068.1 201.5L1062.4 204.3C1061.5 206.9 1059.9 209.4 1059.6 212.1C1059.2 215.5 1059.6 219.0 1060.4 222.4C1061.3 226.4 1062.7 230.2 1064.5 233.9C1066.2 237.5 1068.7 240.8 1070.8 244.2L1067.9 244.2Z" fill="#d8301e"/>
<path d="M1067.9 244.2C1065.6 240.8 1062.8 237.6 1061.0 233.9C1059.2 230.3 1057.8 226.4 1057.0 222.4C1056.2 218.6 1055.9 214.7 1056.4 210.9C1056.9 207.7 1058.7 204.8 1059.9 201.7C1062.2 200.8 1064.3 199.1 1066.7 198.9C1069.8 198.7 1073.1 199.3 1075.9 200.6C1079.4 202.2 1082.3 204.9 1085.1 207.5C1088.5 210.6 1091.4 214.3 1094.3 217.8C1096.7 220.8 1099.2 223.7 1101.2 227.0C1103.4 230.7 1105.0 234.7 1106.9 238.5" fill="none" stroke="#230403" stroke-width="0.9"/>
<path d="M1070.8 244.2C1068.7 240.8 1066.2 237.5 1064.5 233.9C1062.7 230.2 1061.3 226.4 1060.4 222.4C1059.6 219.0 1059.2 215.5 1059.6 212.1C1059.9 209.4 1061.5 206.9 1062.4 204.3C1064.3 203.4 1066.0 201.7 1068.1 201.5C1070.7 201.3 1073.5 201.9 1075.9 203.1C1078.9 204.6 1081.6 206.8 1084.0 209.2C1087.0 212.2 1089.4 215.7 1092.0 219.0C1094.4 222.0 1096.9 224.9 1098.9 228.2C1101.0 231.6 1102.4 235.5 1104.1 239.1" fill="none" stroke="#230403" stroke-width="0.7"/>
<path d="M1080.5 178.2C1083.6 180.7 1086.9 182.9 1089.7 185.7C1093.1 189.2 1096.0 193.2 1098.9 197.2C1102.1 201.6 1105.5 206.1 1108.1 210.9C1110.9 216.0 1112.6 221.7 1115.0 227.0C1116.0 229.3 1117.3 231.6 1118.4 233.9" fill="none" stroke="#230403" stroke-width="0.7"/>
<path d="M1069.0 231.6C1071.3 227.8 1073.3 223.7 1075.9 220.1C1078.3 216.8 1080.9 213.6 1084.0 210.9C1086.3 208.9 1089.2 207.6 1092.0 206.3C1094.2 205.3 1096.6 204.8 1098.9 204.0" fill="none" stroke="#230403" stroke-width="0.7" stroke-dasharray="3 1.5"/>
<path d="M926.7 171.8C929.1 165.9 930.9 159.7 934.4 154.4C938.1 148.7 942.7 143.4 948.0 139.0C952.5 135.2 957.9 132.4 963.4 130.3C966.4 129.1 969.9 129.2 973.1 129.3C978.3 129.4 983.4 130.3 988.5 130.8C980.8 136.7 971.5 141.1 965.3 148.6C958.3 157.0 954.3 167.6 949.9 177.6C945.9 186.9 943.7 197.0 940.2 206.5C938.5 211.1 936.3 215.5 934.4 220.0L913.2 215.8C913.8 211.4 913.8 206.9 915.1 202.7C918.3 192.2 922.6 182.0 926.7 171.8Z" fill="url(#gB2h)" stroke="#230403" stroke-width="0.9" stroke-linejoin="round"/>
<path d="M903.6 244.2L928.6 247.1L922.9 278.0L924.8 260.0L919.0 300.5L895.8 299.6C897.4 286.4 898.8 273.2 900.7 260.0C901.4 254.7 902.6 249.5 903.6 244.2Z" fill="url(#gB2m)" stroke="#230403" stroke-width="0.9" stroke-linejoin="round"/>
<path d="M913.2 215.8C911.6 220.4 910.0 225.1 908.4 229.7C906.8 234.5 905.2 239.4 903.6 244.2" fill="none" stroke="#230403" stroke-width="0.7"/>
<path d="M934.4 220.0C933.4 224.5 932.5 229.1 931.5 233.6C930.5 238.1 929.6 242.6 928.6 247.1" fill="none" stroke="#230403" stroke-width="0.7"/>
<path d="M1034.8 220.0C1033.2 224.5 1031.5 229.0 1030.0 233.6C1028.3 238.7 1026.8 243.9 1025.2 249.0" fill="none" stroke="#230403" stroke-width="0.7"/>
<path d="M1035.7 218.9C1033.8 223.7 1031.6 228.5 1029.9 233.4C1028.1 238.8 1026.7 244.3 1025.1 249.8" fill="none" stroke="#230403" stroke-width="0.7"/>
<path d="M895.8 299.6L919.0 300.5C915.1 305.7 911.6 311.1 907.4 316.0C903.2 320.8 897.9 324.6 893.9 329.5C890.5 333.6 887.7 338.3 885.2 343.0C883.6 346.1 882.1 349.3 881.4 352.7C880.9 355.2 881.4 357.8 881.4 360.4L857.2 360.4C857.2 357.2 856.3 353.8 857.2 350.7C858.9 344.6 861.7 338.9 864.9 333.4C868.9 326.6 873.2 319.9 878.5 314.1C883.6 308.5 890.0 304.4 895.8 299.6Z" fill="url(#gBk)" stroke="#230403" stroke-width="0.9" stroke-linejoin="round"/>
<path d="M906.4 300.0C902.2 305.3 898.2 310.8 893.9 316.0C889.5 321.3 884.6 326.0 880.4 331.4C877.1 335.6 874.3 340.2 871.7 344.9C870.4 347.3 869.3 350.0 868.8 352.7C868.3 355.2 868.8 357.8 868.8 360.4" fill="none" stroke="#230403" stroke-width="0.9"/>
<path d="M857.2 352.3L881.4 353.4" fill="none" stroke="#230403" stroke-width="0.9"/>
<path d="M857.2 355.6L881.4 356.5" fill="none" stroke="#230403" stroke-width="0.9"/>
<path d="M857.2 360.4L881.4 360.4C882.3 363.0 882.3 366.1 884.2 368.1C887.4 371.5 891.9 373.2 895.8 375.8C890.7 375.8 885.5 376.1 880.4 375.8C875.9 375.5 871.2 375.5 866.9 373.9C863.9 372.8 861.8 370.0 859.2 368.1L857.2 360.4Z" fill="#5a0b05" stroke="#230403" stroke-width="0.9" stroke-linejoin="round"/>
<path d="M1025.1 249.8L1063.7 246.9C1061.8 253.3 1059.6 259.7 1057.9 266.2C1056.4 271.9 1055.8 277.9 1054.4 283.6C1053.9 285.5 1052.4 287.1 1052.2 289.0C1050.7 307.0 1048.9 325.0 1049.3 343.0C1049.5 353.4 1052.5 363.6 1054.1 373.9L1016.5 376.8C1015.5 363.6 1013.6 350.4 1013.6 337.2C1013.6 324.3 1015.3 311.4 1016.5 298.6C1017.2 291.0 1018.0 283.3 1019.3 275.8C1020.8 267.1 1023.2 258.5 1025.1 249.8Z" fill="url(#gB3h)" stroke="#230403" stroke-width="0.9" stroke-linejoin="round"/>
<path d="M831.2 355.6L857.2 346.9L857.2 360.4C852.7 360.1 848.1 360.2 843.7 359.4C839.4 358.6 835.4 356.9 831.2 355.6Z" fill="#c01304" stroke="#230403" stroke-width="0.9" stroke-linejoin="round"/>
<path d="M913.2 379.7L1012.6 337.2C1013.3 339.8 1014.3 342.3 1014.6 344.9C1015.6 355.5 1015.9 366.2 1016.5 376.8C993.7 376.8 970.8 376.2 948.0 376.8C936.4 377.1 924.8 378.7 913.2 379.7Z" fill="#c01304" stroke="#230403" stroke-width="0.9" stroke-linejoin="round"/>
<path d="M1059.8 373.4L1115.8 351.2L1115.8 357.9C1113.2 359.8 1111.1 362.6 1108.1 363.7C1101.3 366.2 1094.0 366.9 1086.9 368.5C1077.9 370.5 1068.8 372.4 1059.8 374.3L1059.8 373.4Z" fill="#c01304" stroke="#230403" stroke-width="0.9" stroke-linejoin="round"/>
<path d="M831.2 356.5C835.4 357.8 839.4 359.6 843.7 360.4C848.1 361.2 852.7 361.1 857.2 361.4L866.9 373.9C871.4 374.5 875.9 375.1 880.4 375.8C891.3 377.4 902.1 380.4 913.2 380.7C924.8 381.0 936.4 377.8 948.0 377.4C970.8 376.7 993.7 377.9 1016.5 377.4C1029.1 377.1 1041.6 375.8 1054.1 374.9C1056.0 374.8 1057.9 374.6 1059.8 374.3C1068.9 372.7 1077.9 371.0 1086.9 369.1C1094.0 367.6 1101.3 366.7 1108.1 364.1C1111.2 362.9 1113.2 360.0 1115.8 357.9C1115.2 360.2 1115.1 362.7 1113.9 364.7C1109.9 371.2 1105.7 377.5 1100.4 383.0C1096.6 387.0 1091.9 390.3 1086.9 392.7C1080.8 395.6 1074.3 397.7 1067.6 398.5C1053.5 400.3 1039.3 399.9 1025.1 400.4C1024.5 400.4 1023.8 400.0 1023.2 400.0C1000.0 400.5 976.9 402.4 953.7 401.9C936.9 401.5 920.3 399.0 903.6 397.5C894.6 396.7 885.4 396.6 876.5 395.1C865.4 393.2 854.6 390.0 843.7 387.4L831.2 356.5Z" fill="url(#gH2)" stroke="#230403" stroke-width="0.9" stroke-linejoin="round"/>
<path d="M1016.5 377.4C1017.5 381.4 1018.2 385.4 1019.4 389.3C1020.5 392.9 1021.9 396.4 1023.2 400.0" fill="none" stroke="#230403" stroke-width="0.7"/>
<path d="M1054.1 374.9C1055.7 379.1 1056.9 383.5 1059.0 387.4C1060.8 390.6 1063.5 393.2 1065.7 396.1" fill="none" stroke="#230403" stroke-width="0.7"/>
<path d="M1025.1 400.4C1039.3 399.8 1053.5 400.3 1067.6 398.5C1074.3 397.7 1080.5 394.6 1086.9 392.7C1083.7 396.9 1080.9 401.5 1077.2 405.2C1073.1 409.2 1068.4 412.6 1063.7 415.8C1059.4 418.7 1055.1 421.9 1050.2 423.6C1047.1 424.6 1043.7 423.6 1040.5 423.6C1037.3 421.0 1033.2 419.2 1030.9 415.8C1027.9 411.2 1027.0 405.5 1025.1 400.4Z" fill="url(#gCap)" stroke="#230403" stroke-width="0.9" stroke-linejoin="round"/>
<path d="M885.2 396.1L895.8 395.1L901.6 405.8L888.1 409.6L882.3 403.8L885.2 396.1Z" fill="#c4c9d6" stroke="#230403" stroke-width="0.9" stroke-linejoin="round"/>
<path d="M1142.9 237.2C1146.7 236.9 1150.6 236.1 1154.4 236.3C1158.3 236.5 1162.2 237.4 1166.0 238.2C1166.7 238.4 1167.3 238.9 1168.0 239.2C1166.1 245.0 1164.4 250.8 1162.2 256.5C1159.9 262.4 1157.2 268.2 1154.4 273.9C1150.8 281.1 1146.8 288.1 1142.9 295.1C1140.4 299.6 1137.7 304.1 1135.1 308.6L1124.5 309.6C1124.5 299.6 1123.7 289.6 1124.5 279.7C1124.7 277.5 1126.5 275.9 1127.4 273.9C1130.0 268.1 1132.6 262.3 1135.1 256.5C1137.8 250.1 1140.3 243.6 1142.9 237.2Z" fill="url(#gTv)" stroke="#230403" stroke-width="0.9" stroke-linejoin="round"/>
<path d="M1168.0 239.2L1170.8 242.0L1170.8 268.1L1158.3 274.9L1154.4 273.9C1157.0 268.1 1159.9 262.4 1162.2 256.5C1164.4 250.8 1166.1 245.0 1168.0 239.2Z" fill="#4a0a04" stroke="#230403" stroke-width="0.9" stroke-linejoin="round"/>
<path d="M1124.5 265.2C1127.4 265.4 1130.4 265.0 1133.2 265.8C1140.5 267.9 1147.0 272.4 1154.4 273.9C1169.7 277.0 1185.3 277.8 1200.8 279.7L1216.2 311.5C1190.5 310.5 1164.7 309.1 1139.0 308.6C1134.2 308.5 1129.3 309.3 1124.5 309.6L1124.5 265.2Z" fill="url(#gTh)" stroke="#230403" stroke-width="0.9" stroke-linejoin="round"/>
<path d="M1154.4 273.9C1155.7 274.2 1157.0 275.2 1158.3 274.9C1162.4 273.9 1165.7 269.9 1169.9 270.0C1182.9 270.2 1195.6 273.9 1208.5 275.8C1205.9 277.1 1203.7 279.8 1200.8 279.7C1185.2 279.2 1169.9 275.8 1154.4 273.9Z" fill="#cf1d0d" stroke="#230403" stroke-width="0.9" stroke-linejoin="round"/>
<path d="M1200.8 279.7L1208.5 275.8L1227.8 308.6L1216.2 311.5L1200.8 279.7Z" fill="#d01c0c" stroke="#230403" stroke-width="0.9" stroke-linejoin="round"/>
<path d="M1154.4 273.9C1150.6 281.0 1146.8 288.1 1142.9 295.1C1140.4 299.6 1137.7 304.1 1135.1 308.6" fill="none" stroke="#230403" stroke-width="0.9"/>
<path d="M1127.4 273.9L1154.4 273.9" fill="none" stroke="#230403" stroke-width="0.9"/>
<path d="M1204.6 277.8L1222.0 310.2" fill="none" stroke="#230403" stroke-width="0.6"/>
<path d="M804.9 465.6C797.8 467.9 790.3 468.9 783.7 472.4C777.9 475.5 772.9 480.2 768.3 484.9C763.2 490.2 758.5 496.0 754.7 502.3C750.7 509.0 747.7 516.2 745.1 523.6C742.5 531.1 740.8 538.9 739.3 546.7C737.9 553.7 737.3 560.9 736.4 568.0C736.4 568.3 736.4 568.7 736.4 569.0C737.0 578.6 736.7 588.4 738.3 597.9C739.6 605.8 742.1 613.6 745.1 621.1C747.0 625.9 750.2 630.1 752.8 634.6L766.3 628.8C766.3 624.9 766.4 621.1 766.3 617.2C765.8 604.3 764.4 591.5 764.4 578.6C764.4 565.7 765.7 552.9 766.3 540.0L768.3 546.7C770.2 539.0 771.5 531.1 774.1 523.6C776.0 518.2 779.2 513.3 781.8 508.1C785.7 500.4 789.3 492.5 793.4 484.9C797.0 478.3 801.1 472.0 804.9 465.6Z" fill="url(#gWL)" stroke="#230403" stroke-width="0.9" stroke-linejoin="round"/>
<path d="M783.7 472.4L799.2 467.6C798.5 468.6 798.2 469.9 797.2 470.5C792.9 472.9 788.0 474.0 783.7 476.3C782.5 476.9 781.8 478.2 780.8 479.2" fill="none" stroke="#230403" stroke-width="0.7"/>
<path d="M768.3 496.5C765.7 500.4 762.7 504.0 760.5 508.1C757.8 513.1 755.4 518.2 753.8 523.6C751.6 531.1 750.3 539.0 749.0 546.7C747.8 553.8 747.1 560.9 746.1 568.0" fill="none" stroke="#230403" stroke-width="0.7"/>
<path d="M746.1 540.0C745.4 549.7 744.1 559.3 744.1 569.0C744.1 578.7 744.9 588.3 746.1 597.9C747.1 605.7 748.8 613.5 750.9 621.1C752.0 625.1 754.1 628.8 755.7 632.7" fill="none" stroke="#230403" stroke-width="0.7"/>
<path d="M861.9 421.2C855.8 425.1 849.5 428.6 843.6 432.8C836.9 437.6 830.5 442.9 824.2 448.3C817.6 453.9 810.5 459.0 804.9 465.6C800.1 471.3 797.0 478.3 793.4 484.9C789.3 492.5 785.7 500.4 781.8 508.1C779.2 513.3 776.0 518.2 774.1 523.6C771.5 531.1 769.7 538.9 768.3 546.7C767.1 553.7 767.0 560.9 766.3 568.0L781.8 568.0C782.4 560.9 782.6 553.7 783.7 546.7C784.5 541.5 786.1 536.4 787.6 531.3C788.4 528.7 789.8 526.2 790.5 523.6C793.0 514.6 794.1 505.3 797.2 496.5C800.2 487.8 803.9 479.2 808.8 471.4C813.3 464.2 819.2 457.7 825.2 451.7C831.1 445.8 838.1 441.0 844.5 435.7C850.3 430.9 856.1 426.0 861.9 421.2Z" fill="url(#gB1a)" stroke="#230403" stroke-width="0.9" stroke-linejoin="round"/>
<path d="M903.6 397.5L926.7 400.9L932.5 418.3L910.2 419.3C908.6 414.2 906.9 409.1 905.3 403.9C904.7 401.8 904.2 399.6 903.6 397.5Z" fill="#5c0c05" stroke="#230403" stroke-width="0.9" stroke-linejoin="round"/>
<path d="M910.2 419.3L932.4 418.3C933.0 422.5 934.9 426.7 934.3 430.9C933.5 436.3 930.6 441.2 928.5 446.3C927.4 449.0 925.9 451.5 924.6 454.1L903.4 451.2C904.7 447.0 906.4 442.9 907.3 438.6C908.7 432.2 909.2 425.7 910.2 419.3Z" fill="url(#gN1)" stroke="#230403" stroke-width="0.9" stroke-linejoin="round"/>
<path d="M903.4 451.2L924.6 454.1C919.5 460.5 913.9 466.7 909.2 473.4C904.9 479.6 900.7 485.9 897.6 492.7C894.2 500.1 892.0 508.0 889.9 515.8C887.5 524.7 886.0 533.9 884.1 542.9L855.1 540.0C857.7 531.9 860.1 523.8 862.9 515.8C865.9 507.4 868.5 498.7 872.5 490.7C876.2 483.2 880.8 476.1 886.0 469.5C891.2 462.9 897.6 457.3 903.4 451.2Z" fill="url(#gB2a)" stroke="#230403" stroke-width="0.9" stroke-linejoin="round"/>
<path d="M790.5 523.6L869.6 490.7C867.4 499.1 865.3 507.5 862.9 515.8C860.5 523.9 857.7 531.9 855.1 540.0C842.2 537.7 829.2 536.4 816.5 533.2C807.5 530.9 799.2 526.8 790.5 523.6Z" fill="#c01304" stroke="#230403" stroke-width="0.9" stroke-linejoin="round"/>
<path d="M884.1 542.9L998.0 494.6C994.1 501.7 989.4 508.3 986.4 515.8C982.3 525.8 980.0 536.4 976.8 546.7C955.6 546.4 934.3 546.7 913.1 545.8C903.4 545.4 893.8 543.9 884.1 542.9Z" fill="#c01304" stroke="#230403" stroke-width="0.9" stroke-linejoin="round"/>
<path d="M1019.3 540.4C1051.5 526.2 1083.5 511.9 1115.8 497.9C1141.5 486.8 1167.1 475.4 1193.1 465.1C1210.2 458.3 1227.8 452.9 1245.2 446.8L1270.3 456.4C1254.8 466.7 1239.9 477.9 1223.9 487.3C1207.7 496.9 1190.8 505.4 1173.7 513.4C1169.5 515.4 1164.7 516.0 1160.2 517.2C1145.4 521.1 1130.8 525.7 1115.8 528.8C1096.6 532.8 1077.3 535.6 1057.9 538.5C1045.1 540.4 1032.2 541.7 1019.3 543.3L1019.3 540.4Z" fill="#c01304" stroke="#230403" stroke-width="0.9" stroke-linejoin="round"/>
<path d="M1270.3 456.4L1273.2 488.3L1246.1 501.8C1243.9 499.9 1241.9 497.6 1239.4 496.0C1234.4 492.8 1229.1 490.2 1223.9 487.3L1270.3 456.4Z" fill="url(#gSl)" stroke="#230403" stroke-width="0.9" stroke-linejoin="round"/>
<path d="M1267.4 458.3L1269.9 489.2" fill="none" stroke="#230403" stroke-width="0.6"/>
<path d="M1048.3 431.3C1059.9 431.9 1071.4 432.6 1083.0 433.2C1083.6 433.2 1084.3 433.4 1084.9 433.2C1092.7 430.2 1100.5 427.1 1108.1 423.6C1125.6 415.5 1143.1 407.5 1160.2 398.5C1167.7 394.6 1174.6 389.8 1181.5 384.9C1188.2 380.1 1195.0 375.3 1200.8 369.5C1206.6 363.7 1211.6 357.0 1216.2 350.2C1220.0 344.5 1222.4 337.9 1225.9 331.9C1227.9 328.5 1230.4 325.4 1232.6 322.2C1233.9 323.2 1235.9 323.6 1236.5 325.1C1241.4 337.0 1244.8 349.6 1249.0 361.8C1245.8 363.1 1242.0 363.3 1239.4 365.6C1235.9 368.7 1234.8 373.7 1231.7 377.2C1225.7 384.1 1219.5 390.8 1212.4 396.5C1203.3 403.7 1193.7 410.5 1183.4 415.8C1171.1 422.1 1157.8 426.5 1144.8 431.3C1135.3 434.8 1125.2 437.1 1115.8 440.9C1107.8 444.1 1100.2 448.3 1092.7 452.5C1084.1 457.3 1076.3 463.4 1067.6 468.0C1064.6 469.6 1060.4 468.6 1057.9 470.9C1050.4 477.6 1044.3 485.8 1038.6 494.1C1032.7 502.6 1027.8 511.8 1023.2 521.1C1020.1 527.3 1018.1 534.0 1015.4 540.4C1014.3 543.0 1012.9 545.5 1011.6 548.1L976.8 546.7C980.0 536.4 982.3 525.8 986.4 515.8C989.4 508.3 993.1 501.0 998.0 494.6C1004.4 486.1 1012.4 478.9 1020.0 471.4C1021.5 470.0 1023.4 469.2 1025.1 468.0C1029.6 464.8 1035.3 462.8 1038.6 458.3C1042.7 452.7 1044.0 445.5 1046.3 439.0C1047.2 436.5 1047.6 433.9 1048.3 431.3Z" fill="url(#gB3a)" stroke="#230403" stroke-width="0.9" stroke-linejoin="round"/>
<path d="M1048.3 431.3L1083.0 433.2L1084.9 439.0C1079.1 443.5 1074.4 449.7 1067.6 452.5C1058.5 456.3 1048.3 456.4 1038.6 458.3C1041.2 451.9 1044.0 445.5 1046.3 439.0C1047.2 436.5 1047.6 433.9 1048.3 431.3Z" fill="url(#gFil)" stroke="#230403" stroke-width="0.9" stroke-linejoin="round"/>
<path d="M1225.9 331.9L1239.4 365.6" fill="none" stroke="#230403" stroke-width="0.9"/>
<path d="M1228.8 327.0L1243.6 363.7" fill="none" stroke="#230403" stroke-width="0.6"/>
<path d="M1119.7 332.8C1115.5 342.4 1117.7 353.9 1113.9 363.7C1109.8 374.2 1103.3 383.7 1096.5 392.7C1091.0 399.9 1083.2 405.1 1077.2 412.0C1074.1 415.5 1072.1 419.7 1069.5 423.6L1075.3 431.3C1078.5 431.6 1081.8 432.9 1084.9 432.2C1092.9 430.3 1100.6 427.0 1108.1 423.6C1125.7 415.7 1142.8 406.9 1160.2 398.5L1168.0 310.6L1138.0 308.7C1131.9 316.7 1123.7 323.6 1119.7 332.8Z" fill="#430802" stroke="#230403" stroke-width="0.9" stroke-linejoin="round"/>
<path d="M767.3 495.6C768.6 499.1 769.5 502.9 771.2 506.2C773.0 509.7 775.1 513.1 777.9 515.8C781.6 519.3 785.8 522.4 790.5 524.5C798.8 528.3 807.6 531.0 816.5 533.2C829.2 536.3 842.1 538.6 855.1 540.5C864.7 541.9 874.4 542.3 884.1 543.2C893.8 544.1 903.4 545.7 913.1 546.1C934.3 546.9 955.6 547.3 976.8 546.7C991.2 546.3 1005.6 544.3 1020.0 542.9C1032.6 541.7 1045.3 540.7 1057.9 538.8C1077.3 535.9 1096.6 532.8 1115.8 528.8C1130.8 525.6 1145.4 521.1 1160.2 517.2C1157.6 523.6 1154.6 529.9 1152.5 536.5C1150.8 541.8 1149.9 547.4 1148.6 552.9C1124.8 557.1 1101.1 562.2 1077.2 565.5C1051.6 569.0 1025.8 571.0 1000.0 573.2C990.4 574.0 980.7 574.6 971.0 574.7C951.7 574.8 932.4 574.6 913.1 573.8C901.5 573.3 889.9 571.8 878.3 570.9C869.9 570.2 861.5 570.0 853.2 569.0C840.9 567.5 828.7 565.6 816.5 563.2C805.5 561.0 794.4 558.7 783.7 555.4C777.6 553.5 772.1 550.3 766.3 547.7C763.7 540.9 760.6 534.4 758.6 527.4C757.4 523.0 757.3 518.4 756.7 513.9L767.3 495.6Z" fill="url(#gH3)" stroke="#230403" stroke-width="0.9" stroke-linejoin="round"/>
<path d="M774.1 523.6L766.3 547.7" fill="none" stroke="#230403" stroke-width="0.7"/>
<path d="M790.5 524.5L783.7 555.4" fill="none" stroke="#230403" stroke-width="0.7"/>
<path d="M855.1 540.5C854.8 545.1 854.5 549.8 854.2 554.4C853.9 559.3 853.5 564.1 853.2 569.0" fill="none" stroke="#230403" stroke-width="0.7"/>
<path d="M884.1 543.2C883.1 547.6 882.1 552.0 881.2 556.4C880.2 561.2 879.3 566.1 878.3 570.9" fill="none" stroke="#230403" stroke-width="0.7"/>
<path d="M976.8 546.7C975.8 551.2 974.8 555.7 973.9 560.2C972.9 565.0 972.0 569.9 971.0 574.7" fill="none" stroke="#230403" stroke-width="0.7"/>
<path d="M1015.4 540.4C1013.8 546.8 1011.9 553.2 1010.6 559.7C1009.7 564.2 1009.3 568.7 1008.7 573.2" fill="none" stroke="#230403" stroke-width="0.7"/>
<path d="M1160.2 517.2C1164.7 515.9 1169.5 515.4 1173.7 513.4C1190.8 505.4 1207.2 496.0 1223.9 487.3C1229.1 490.2 1235.5 491.6 1239.4 496.0C1243.6 500.7 1245.7 507.2 1247.1 513.4C1249.6 524.8 1250.0 536.5 1251.0 548.1C1251.3 552.1 1251.2 556.0 1251.0 560.0C1250.5 569.7 1250.3 579.4 1249.0 589.0C1247.7 598.7 1245.6 608.4 1243.2 617.9C1242.4 621.3 1240.0 624.2 1239.4 627.6C1239.0 629.5 1240.7 631.5 1240.3 633.4C1239.4 637.5 1237.1 641.1 1235.5 644.9C1232.9 651.3 1231.6 658.4 1227.8 664.2C1223.8 670.3 1218.3 675.4 1212.4 679.7C1203.3 686.4 1193.1 691.3 1183.4 697.1C1178.3 695.2 1172.7 694.2 1168.0 691.3C1164.1 688.9 1161.0 685.3 1158.3 681.6C1155.4 677.5 1153.2 672.8 1151.5 668.1C1149.0 661.2 1146.9 654.1 1145.8 646.9C1144.3 637.3 1144.0 627.6 1143.8 617.9C1143.6 608.3 1143.7 598.6 1144.8 589.0C1145.9 579.2 1148.7 569.7 1150.6 560.0L1148.6 563.6C1149.9 554.6 1150.3 545.4 1152.5 536.5C1154.2 529.8 1157.6 523.6 1160.2 517.2Z" fill="url(#gWR)" stroke="#230403" stroke-width="0.9" stroke-linejoin="round"/>
<path d="M1160.2 517.2L1173.7 513.4L1185.3 523.0C1181.4 526.2 1176.6 528.5 1173.7 532.7C1170.6 537.2 1169.2 542.8 1168.0 548.1C1166.0 557.0 1165.4 566.1 1164.1 575.1C1163.4 579.7 1162.4 584.3 1162.2 589.0C1161.8 598.6 1161.6 608.3 1162.2 617.9C1162.8 627.6 1163.9 637.4 1166.0 646.9C1167.7 654.8 1169.9 662.8 1173.7 670.0C1175.8 674.0 1180.2 676.5 1183.4 679.7C1187.9 678.4 1192.2 675.8 1196.9 675.8C1202.2 675.8 1207.2 678.4 1212.4 679.7L1183.4 697.1C1178.3 695.2 1172.7 694.2 1168.0 691.3C1164.1 688.9 1161.0 685.3 1158.3 681.6C1155.4 677.5 1153.2 672.8 1151.5 668.1C1149.0 661.2 1146.9 654.1 1145.8 646.9C1144.3 637.3 1144.0 627.6 1143.8 617.9C1143.6 608.3 1143.7 598.6 1144.8 589.0C1145.9 579.2 1148.7 569.7 1150.6 560.0L1148.6 563.6C1149.9 554.6 1150.3 545.4 1152.5 536.5C1154.2 529.8 1157.6 523.6 1160.2 517.2Z" fill="url(#gWRr)" stroke="#230403" stroke-width="0.9" stroke-linejoin="round"/>
<ellipse cx="1213.3" cy="615.0" rx="15.4" ry="29.9" fill="none" stroke="#230403" stroke-width="0.8" transform="rotate(8 1213.3 615.0)"/>
<path d="M1173.7 513.4L1185.3 523.0C1194.3 521.1 1203.6 520.1 1212.4 517.2C1219.2 514.9 1226.0 512.0 1231.7 507.6C1235.4 504.7 1236.8 499.9 1239.4 496.0" fill="none" stroke="#230403" stroke-width="0.9"/>
<path d="M1158.3 553.9C1163.4 552.9 1168.6 552.3 1173.7 551.0C1186.7 547.8 1200.2 545.8 1212.4 540.4C1223.0 535.7 1232.2 528.2 1241.3 521.1C1243.8 519.1 1245.2 516.0 1247.1 513.4" fill="none" stroke="#230403" stroke-width="0.7"/>
<path d="M1174.7 512.4C1180.8 510.5 1187.2 509.2 1193.1 506.6C1199.8 503.7 1206.2 499.9 1212.4 496.0C1216.5 493.4 1220.1 490.2 1223.9 487.3" fill="none" stroke="#230403" stroke-width="0.7"/>
<path d="M1239.4 627.6C1239.7 629.5 1240.7 631.5 1240.3 633.4C1239.4 637.5 1237.5 641.3 1235.5 644.9C1233.9 647.7 1231.6 650.1 1229.7 652.7C1231.3 648.2 1232.9 643.7 1234.6 639.2C1236.1 635.3 1237.8 631.5 1239.4 627.6Z" fill="#b01509" stroke="#230403" stroke-width="0.6" stroke-linejoin="round"/>
<path d="M766.3 547.7L783.7 555.4C782.7 563.1 781.0 570.8 780.8 578.6C780.4 591.5 781.1 604.3 781.8 617.2C782.4 627.5 783.7 637.8 784.7 648.1C785.6 657.1 786.7 666.1 787.6 675.1C787.7 675.9 787.5 676.8 787.6 677.6C788.8 686.3 789.7 695.1 791.4 703.7C792.9 711.5 795.1 719.2 797.2 726.9C799.6 735.3 802.3 743.6 804.9 752.0C801.1 748.8 796.6 746.1 793.4 742.3C789.5 737.7 786.2 732.4 783.7 726.9C781.0 720.8 779.5 714.1 777.9 707.6C776.9 703.5 776.9 699.2 776.0 695.0C774.3 686.9 771.4 679.1 770.2 670.9C769.1 663.4 769.8 655.7 769.2 648.1C768.5 637.8 767.0 627.5 766.3 617.2C765.4 604.3 764.4 591.5 764.4 578.6C764.4 568.3 765.7 558.0 766.3 547.7Z" fill="url(#gB1b)" stroke="#230403" stroke-width="0.9" stroke-linejoin="round"/>
<path d="M853.2 569.0L878.3 570.9C877.3 579.9 876.2 588.9 875.4 597.9C874.8 604.3 874.2 610.8 874.1 617.2C873.9 630.1 873.7 643.0 874.4 655.8C875.1 669.1 877.1 682.3 878.3 695.6C879.0 703.8 879.1 712.0 880.2 720.1C881.1 726.9 882.6 733.7 884.1 740.4C885.8 748.2 886.5 756.4 889.9 763.6C891.8 767.7 896.3 770.0 899.5 773.2C894.4 773.1 889.2 773.4 884.1 772.8C880.8 772.4 877.2 772.1 874.4 770.3C871.1 768.2 868.7 764.9 866.7 761.6C864.2 757.4 862.5 752.7 860.9 748.1C859.3 743.7 858.0 739.2 857.1 734.6C856.0 728.9 855.6 723.0 855.1 717.2C854.3 709.0 854.0 700.7 853.2 692.5C851.9 679.0 849.8 665.6 849.0 652.0C848.4 640.4 848.7 628.8 849.0 617.2C849.2 610.8 849.7 604.3 850.3 597.9C851.1 588.3 852.2 578.6 853.2 569.0Z" fill="url(#gB2b)" stroke="#230403" stroke-width="0.9" stroke-linejoin="round"/>
<path d="M971.0 574.7L1007.6 571.9C1006.3 580.6 1004.8 589.2 1003.8 597.9C1003.0 604.3 1002.2 610.7 1002.2 617.2C1002.2 630.1 1002.8 643.0 1003.8 655.8C1004.8 669.5 1006.3 683.1 1008.3 696.7C1009.4 704.5 1011.4 712.1 1013.1 719.8C1015.9 732.1 1018.4 744.4 1021.8 756.5C1023.3 761.8 1025.7 766.8 1027.6 772.0C1017.9 772.8 1008.3 775.0 998.6 774.5C995.6 774.3 993.0 772.1 990.9 770.0C988.3 767.3 986.1 764.0 985.1 760.4C981.8 748.4 980.6 735.9 978.3 723.7C976.7 715.3 974.7 707.0 973.5 698.6C971.6 685.1 969.9 671.5 969.0 657.8C968.1 644.3 968.1 630.7 968.1 617.2C968.1 610.8 968.6 604.3 969.0 597.9C969.5 590.2 970.3 582.4 971.0 574.7Z" fill="url(#gB3b)" stroke="#230403" stroke-width="0.9" stroke-linejoin="round"/>
<path d="M770.2 670.9L787.6 677.6C788.9 686.3 789.7 695.1 791.4 703.7C792.9 711.5 795.1 719.2 797.2 726.9C799.6 735.3 802.3 743.6 804.9 752.0C801.1 748.8 796.6 746.1 793.4 742.3C789.5 737.7 786.2 732.4 783.7 726.9C781.0 720.8 779.5 714.1 777.9 707.6C776.9 703.5 776.9 699.2 776.0 695.0C774.3 686.9 772.1 678.9 770.2 670.9Z" fill="url(#gLeg)" stroke="#230403" stroke-width="0.9" stroke-linejoin="round"/>
<path d="M853.2 692.5L878.3 695.6C878.9 703.8 879.1 712.0 880.2 720.1C881.1 726.9 882.6 733.7 884.1 740.4C885.8 748.2 886.5 756.4 889.9 763.6C891.8 767.7 896.3 770.0 899.5 773.2C894.4 773.1 889.2 773.4 884.1 772.8C880.8 772.4 877.2 772.1 874.4 770.3C871.1 768.2 868.7 764.9 866.7 761.6C864.2 757.4 862.5 752.7 860.9 748.1C859.3 743.7 858.0 739.2 857.1 734.6C856.0 728.9 855.6 723.0 855.1 717.2C854.3 709.0 853.8 700.7 853.2 692.5Z" fill="url(#gLeg)" stroke="#230403" stroke-width="0.9" stroke-linejoin="round"/>
<path d="M973.5 698.6L1008.3 696.7C1009.9 704.4 1011.4 712.1 1013.1 719.8C1015.9 732.1 1018.4 744.4 1021.8 756.5C1023.3 761.8 1025.7 766.8 1027.6 772.0C1017.9 772.8 1008.3 775.0 998.6 774.5C995.6 774.3 993.0 772.1 990.9 770.0C988.3 767.3 986.1 764.0 985.1 760.4C981.8 748.4 980.6 735.9 978.3 723.7C976.7 715.3 975.1 707.0 973.5 698.6Z" fill="url(#gLeg)" stroke="#230403" stroke-width="0.9" stroke-linejoin="round"/>
<path d="M752.8 634.6L766.3 628.8C767.3 635.2 768.4 641.6 769.2 648.1C770.0 654.8 770.5 661.6 771.2 668.4C766.7 665.5 761.2 663.7 757.6 659.7C754.8 656.6 753.6 652.2 752.8 648.1C752.0 643.7 752.8 639.1 752.8 634.6Z" fill="#c01304" stroke="#230403" stroke-width="0.9" stroke-linejoin="round"/>
<path d="M787.6 675.1L849.0 651.6L851.3 691.5C839.7 689.3 827.9 687.7 816.5 684.8C806.7 682.3 797.2 678.3 787.6 675.1Z" fill="#c01304" stroke="#230403" stroke-width="0.9" stroke-linejoin="round"/>
<path d="M880.2 694.4L968.6 657.8L972.9 696.8C953.0 697.0 933.0 697.8 913.1 697.3C902.1 697.0 891.2 695.4 880.2 694.4Z" fill="#c01304" stroke="#230403" stroke-width="0.9" stroke-linejoin="round"/>
<path d="M1013.5 695.1L1143.8 640.1C1144.8 644.3 1145.5 648.6 1146.7 652.7C1149.1 661.1 1151.8 669.4 1154.4 677.8C1135.1 680.7 1115.8 683.7 1096.5 686.4C1083.7 688.2 1070.8 689.9 1057.9 691.3C1043.1 692.8 1028.3 693.8 1013.5 695.1Z" fill="#c01304" stroke="#230403" stroke-width="0.9" stroke-linejoin="round"/>
<path d="M752.8 648.1C754.4 652.0 754.8 656.6 757.6 659.7C761.2 663.7 766.6 665.6 771.2 668.4C776.6 671.6 781.7 675.4 787.6 677.6C796.9 681.1 806.8 683.2 816.5 685.4C828.7 688.2 840.9 690.5 853.2 692.5C861.5 693.9 869.9 694.8 878.3 695.6C889.9 696.6 901.5 697.6 913.1 697.9C932.4 698.4 951.7 698.1 971.0 697.9C983.4 697.7 995.9 697.8 1008.3 696.7C1030.9 694.8 1053.4 692.0 1075.8 689.0C1101.6 685.6 1127.3 681.0 1153.1 677.4C1153.6 677.3 1154.0 677.8 1154.4 678.1C1159.0 682.4 1162.7 687.8 1168.0 691.3C1172.6 694.3 1178.3 695.2 1183.4 697.1L1176.6 700.0L1177.2 699.6C1169.2 700.2 1161.1 700.5 1153.1 701.5C1127.3 704.7 1101.6 708.7 1075.8 712.1C1054.9 714.9 1034.0 717.8 1013.1 720.2C1001.7 721.5 990.2 722.8 978.7 723.0C956.8 723.4 935.0 722.6 913.1 722.0C902.1 721.7 891.1 721.0 880.2 720.1C871.8 719.4 863.4 718.6 855.1 717.2C842.2 715.0 829.3 712.2 816.5 709.5C808.1 707.7 799.5 706.6 791.4 703.7C785.8 701.7 780.3 699.0 776.0 695.0C771.1 690.4 768.5 683.9 764.4 678.6C762.4 676.0 759.0 674.3 757.6 671.3C755.4 666.5 754.9 661.0 753.8 655.8C753.3 653.3 753.1 650.7 752.8 648.1Z" fill="url(#gH4)" stroke="#230403" stroke-width="0.9" stroke-linejoin="round"/>
<path d="M770.2 670.9L776.0 695.0" fill="none" stroke="#230403" stroke-width="0.7"/>
<path d="M787.6 677.6L791.4 703.7" fill="none" stroke="#230403" stroke-width="0.7"/>
<path d="M853.2 692.5L855.1 717.2" fill="none" stroke="#230403" stroke-width="0.7"/>
<path d="M878.3 695.6L880.2 720.1" fill="none" stroke="#230403" stroke-width="0.7"/>
<path d="M973.5 698.6L978.3 723.7" fill="none" stroke="#230403" stroke-width="0.7"/>
<path d="M1008.3 696.7L1013.1 720.2" fill="none" stroke="#230403" stroke-width="0.7"/>
<path d="M791.4 703.7L855.1 717.2L857.1 734.6C842.3 741.0 828.0 748.8 812.7 753.9C810.2 754.7 807.5 752.6 804.9 752.0C802.3 743.6 799.6 735.3 797.2 726.9C795.1 719.2 793.3 711.4 791.4 703.7Z" fill="#540a04" stroke="#230403" stroke-width="0.9" stroke-linejoin="round"/>
<path d="M880.2 720.1L978.7 723.0L980.6 739.4L899.5 773.2C896.3 770.0 891.8 767.7 889.9 763.6C886.5 756.4 885.8 748.2 884.1 740.4C882.6 733.7 881.5 726.9 880.2 720.1Z" fill="#540a04" stroke="#230403" stroke-width="0.9" stroke-linejoin="round"/>
<path d="M1013.1 720.2C1034.0 717.5 1054.9 714.9 1075.8 712.1C1101.6 708.7 1127.3 704.7 1153.1 701.5C1161.1 700.5 1169.2 700.2 1177.2 699.6C1174.9 703.8 1173.4 708.4 1170.4 712.1C1167.8 715.3 1164.5 718.1 1160.8 719.8C1121.9 737.5 1082.7 754.4 1043.0 770.0C1038.2 771.9 1032.7 771.3 1027.6 772.0C1025.7 766.8 1023.3 761.8 1021.8 756.5C1018.4 744.5 1016.0 732.3 1013.1 720.2Z" fill="#540a04" stroke="#230403" stroke-width="0.9" stroke-linejoin="round"/>
<rect x="730" y="690" width="540" height="90" fill="url(#gShade)" clip-path="url(#cpBody)"/></svg>
<!-- splitter handle -->
<div style="position:absolute;left:273px;top:413px;width:11px;height:48px;background:#f7f7f7;border-right:1px solid #9a9ea9;border-top:1px solid #b8bbc4;border-bottom:1px solid #b8bbc4"></div>
<div style="position:absolute;left:274px;top:434px;width:6px;height:6px;border-radius:50%;border:1px solid #aaa;background:#eee"></div>
<!-- tree title -->
<svg style="position:absolute;left:276px;top:38px" width="200" height="24" viewBox="0 0 200 24">
 <path d="M3 5 L7.5 9 L3 13 Z" fill="#333"/>
 <g transform="translate(20,2)"><path d="M4 2 L9 0.3 L13.5 2.2 L13.5 6.8 L17 8.6 L17 14 L12 17.5 L0.6 10.6 L0.6 6 L4 4.6 Z" fill="#f0b90f" stroke="#7a5a08" stroke-width="1" stroke-linejoin="round"/><path d="M4 2 L9 0.3 L13.5 2.2 L8.6 4.4 Z" fill="#fbe27a"/><path d="M8.6 8.8 L13.5 6.8 L17 8.6 L12 11.4 Z" fill="#fbe27a"/><path d="M0.6 6 L4 4.6 L4 2 L8.6 4.4 L8.6 8.8 L12 11.4 L12 17.5 L0.6 10.6Z" fill="#f5c92e"/><path d="M4 2 L8.6 4.4 L13.5 2.2 M8.6 4.4 L8.6 8.8 L12 11.4 L17 8.6 M12 11.4 L12 17.5 M8.6 8.8 L13.5 6.8 M4 4.6 L4 2" fill="none" stroke="#7a5a08" stroke-width="0.8"/></g>
 <text x="43" y="17.5" font-family="Liberation Sans, sans-serif" font-size="15" fill="#1a1a1a" letter-spacing="0.15">Duck&#160;&#160;(Default&lt;&lt;De...</text>
</svg>
<!-- heads-up toolbar -->
<svg style="position:absolute;left:745px;top:4px" width="340" height="30" viewBox="745 4 340 30">
 <!-- zoom to fit -->
 <path d="M759 21 L752.5 26.5" stroke="#4d8db8" stroke-width="3" stroke-linecap="round"/>
 <circle cx="763.5" cy="16" r="6" fill="#d9dde5" stroke="#70747f" stroke-width="1.2"/>
 <path d="M763.5 11.5 l-1.6 2 h3.2z M763.5 20.5 l-1.6 -2 h3.2z M759 16 l2 -1.6 v3.2z M768 16 l-2 -1.6 v3.2z" fill="#333"/>
 <!-- zoom to area -->
 <rect x="783" y="10" width="13" height="12.5" fill="none" stroke="#444" stroke-width="1" stroke-dasharray="3 1.5"/>
 <path d="M783.5 22.5 L778 27" stroke="#4d8db8" stroke-width="3" stroke-linecap="round"/>
 <circle cx="787.5" cy="18" r="6.3" fill="#dadde4" stroke="#8a8e98" stroke-width="1.1"/>
 <!-- previous view -->
 <path d="M805.5 21 L818.5 11 L821.5 13.5 L810.5 27 Z" fill="#d6d9e0" stroke="#888c96" stroke-width="1"/>
 <ellipse cx="807.8" cy="24" rx="3" ry="3.6" transform="rotate(-40 807.8 24)" fill="#c4c8d0" stroke="#888c96"/>
 <path d="M813 23 L817 19.5 V21.6 H822 V24.4 H817 V26.5 Z" fill="#3f86b8"/>
 <!-- section view -->
 <path d="M831 15 Q839 8.5 847.5 13 V23 Q839 28.5 831 25 Z" fill="#e4e7ec" stroke="#6a6e78" stroke-width="1"/>
 <path d="M831 15.5 L836 17 V27 L831 25 Z M842.5 16.5 L847.5 14 V23 L842.5 26.5Z" fill="#4f9cc4" stroke="#2f607c" stroke-width="0.8"/>
 <path d="M836 17 Q839 14.5 842.5 16.5 V26.5 H836Z" fill="#b9bdc6"/>
 <!-- view orientation cube -->
 <path d="M856.5 15 L862 10 H873.5 V22.5 L868.5 27.5" fill="#f3f4f6" stroke="#444" stroke-width="1"/>
 <rect x="856.5" y="15" width="12" height="12.5" fill="#5fa2c9" stroke="#2e5d7a" stroke-width="1"/>
 <path d="M868.5 15 L873.5 10 M865 10v5 M873.5 17 h-5" stroke="#444" stroke-width="1" fill="none"/>
 <path d="M881.5 18 h6 l-3 3.2z" fill="#8f939d"/>
 <!-- display style cube -->
 <path d="M897.5 13 L905 9.5 L913.5 11.5 V24 L905 27.5 L897.5 24.5 Z" fill="#fff" stroke="#7a7e88" stroke-width="0.9"/>
 <path d="M897.5 13 L905 15 V27.5 L897.5 24.5 Z" fill="#3d8cc0"/><path d="M905 15 L909 14 V26 L905 27.5Z" fill="#8fc0dc"/>
 <path d="M921.5 18 h6 l-3 3.2z" fill="#8f939d"/>
 <!-- hide/show (active) -->
 <rect x="932.5" y="6.5" width="38.5" height="24.5" fill="#a7abb6" stroke="#8b8e98"/>
 <rect x="958.5" y="7.5" width="12" height="23" fill="#b7bbc6"/><path d="M958.5 7.5 H970.5 V30" fill="none" stroke="#e2e4ea" stroke-width="1"/>
 <path d="M958.5 7 V31" stroke="#8b8e98"/>
 <path d="M937 19.5 Q945.5 10.5 954 19.5 Q945.5 27 937 19.5Z" fill="#f4f4f6" stroke="#6a6d76" stroke-width="0.8"/>
 <circle cx="945.5" cy="18.5" r="4.2" fill="#55585f"/><path d="M945.5 14.3 A4.2 4.2 0 0 0 945.5 22.7Z" fill="#111"/>
 <path d="M945.5 11 V27" stroke="#111" stroke-width="1.1"/>
 <path d="M961.5 18 h6 l-3 3.2z" fill="#6f737d"/>
 <!-- edit appearance -->
 <g transform="translate(984,17)"><circle r="8" fill="#e2402f"/><path d="M0 0 L-8 0 A8 8 0 0 1 -1 -7.9 Z" fill="#3b8fdc"/><path d="M0 0 L-8 0 A8 8 0 0 0 3 7.4 Z" fill="#46a83a"/><path d="M0 0 L8 1 A8 8 0 0 1 3 7.4 Z" fill="#f1c232"/></g>
 <path d="M980.5 28.5 L982 23.5 L991.5 14.5 L995 17.5 L985.5 27 Z" fill="#f0c64a" stroke="#6b5a2a" stroke-width="0.9"/><path d="M980.5 28.5 L982 23.5 L985.5 27Z" fill="#333"/><path d="M990 16 L993.5 19" stroke="#c0392b" stroke-width="2"/>
 <!-- scene -->
 <rect x="1001.5" y="20.5" width="18.5" height="8" fill="#333"/><path d="M1004 22h3v2.5h-3z M1011 22h3v2.5h-3z M1007.5 25.5h3v2.5h-3z M1014.5 25.5h3v2.5h-3z M1001.5 25.5h2.5v2.5h-2.5z M1017.5 22h2.5v2.5h-2.5z" fill="#eee"/>
 <g transform="translate(1010.3,16.5)"><circle r="7.8" fill="#e2402f"/><path d="M0 0 L-7.8 0 A7.8 7.8 0 0 1 -1 -7.7 Z" fill="#3b8fdc"/><path d="M0 0 L-7.8 0 A7.8 7.8 0 0 0 3 7.2 Z" fill="#46a83a"/><path d="M0 0 L7.8 1 A7.8 7.8 0 0 1 3 7.2 Z" fill="#f1c232"/></g>
 <path d="M1027.5 18 h6 l-3 3.2z" fill="#8f939d"/>
 <!-- monitor -->
 <rect x="1042.5" y="11.5" width="17" height="12" fill="#d9dbdf" stroke="#4a4d55" stroke-width="1.3"/><path d="M1051 24 V26.5 M1046.5 27 H1055.5" stroke="#3a3d44" stroke-width="1.6"/>
 <path d="M1067.5 18 h6 l-3 3.2z" fill="#8f939d"/>
</svg>
<!-- window controls -->
<svg style="position:absolute;left:1420px;top:8px" width="134" height="90" viewBox="1420 8 134 90">
 <g fill="none" stroke="#8d919c" stroke-width="1">
  <rect x="1427.5" y="13" width="12" height="13"/><rect x="1454.5" y="13" width="12" height="13"/>
  <rect x="1509" y="13.5" width="8" height="7"/><rect x="1505.5" y="16.5" width="8" height="7" fill="#c4c9d6"/>
  <path d="M1533 14.5 L1543 24.5 M1543 14.5 L1533 24.5" stroke-width="1.2"/>
 </g>
 <path d="M1433.5 16 v7 l-4 -3.5z M1460 16 v7 l4 -3.5z" fill="#8d919c"/>
 <rect x="1481" y="21.5" width="10.5" height="3" fill="#8d919c"/>
 <path d="M1448.5 50 L1457.5 58.5 L1474 42" fill="none" stroke="#9cc497" stroke-width="5.5"/>
 <path d="M1496 71 L1515 90 M1515 71 L1496 90" fill="none" stroke="#d7aaae" stroke-width="5.5"/>
</svg>
<!-- task pane tabs -->
<div style="position:absolute;left:1525px;top:61px;width:29px;height:210px;background:#e1e1e1;border-left:1px solid #70747f;border-top:1px solid #8a8d96;border-bottom:1px solid #8a8d96"></div>
<div style="position:absolute;left:1526px;top:62px;width:28px;height:29px;background:#fbfbfb"></div>
<svg style="position:absolute;left:1526px;top:62px" width="28" height="209" viewBox="0 0 28 209">
 <g stroke="#a6a8ae" stroke-width="1"><path d="M0 29.5H28M0 59.5H28M0 89.5H28M0 119.5H28M0 149.5H28M0 179.5H28"/></g>
 <!-- home -->
 <path d="M7 13.5 L15.5 5.5 L24 13.5" fill="none" stroke="#1f4e8a" stroke-width="1.8"/><path d="M9.5 13 V22.5 H21.5 V13" fill="#fff" stroke="#333" stroke-width="1.2"/><rect x="14" y="16.5" width="4" height="6" fill="#fff" stroke="#333" stroke-width="1"/>
 <!-- design library (books) -->
 <g transform="translate(0,30)" fill="#f4f4f4" stroke="#333" stroke-width="1"><path d="M10 8 L13 6 L16 8 V21 L13 23 L10 21Z"/><path d="M13 8 L17 5.5 L20 7.5 V20.5 L16 23 L13 21Z"/><path d="M17 8 L21 6 L23.5 8 V20 L20 22.5 L17 21Z"/></g>
 <!-- folder -->
 <g transform="translate(0,60)"><path d="M7.500 22.500 V8.500 H13.500 L15 10.500 H22.500 V13" fill="#f4f4f4" stroke="#333" stroke-width="1.1"/><path d="M7.500 22.500 L11.500 13 H27 L23 22.500 Z" fill="#fdfdfd" stroke="#333" stroke-width="1.1"/></g>
 <!-- view palette -->
 <g transform="translate(0,90)"><rect x="8.500" y="6.500" width="16" height="16" rx="1.500" fill="#ececec" stroke="#444" stroke-width="1.100"/><rect x="11" y="9" width="7" height="4" fill="#f2b51d" stroke="#7a5a08" stroke-width="0.800"/><rect x="19.500" y="9" width="3.500" height="4" fill="#f2b51d" stroke="#7a5a08" stroke-width="0.800"/><path d="M11 15.500h11v2.500h-3.500v2.500h-4v-2.500h-3.500z" fill="#f2b51d" stroke="#7a5a08" stroke-width="0.800"/></g>
 <!-- appearances -->
 <g transform="translate(16.500,134)"><circle r="8" fill="#e2402f"/><path d="M0 0 L-8 0 A8 8 0 0 1 -1 -7.900 Z" fill="#3b8fdc"/><path d="M0 0 L-8 0 A8 8 0 0 0 3 7.400 Z" fill="#46a83a"/><path d="M0 0 L8 1 A8 8 0 0 1 3 7.400 Z" fill="#f1c232"/><circle r="8" fill="none" stroke="#666" stroke-width="0.700"/></g>
 <!-- custom props -->
 <g transform="translate(8,155)"><rect x="0.500" y="0.500" width="16" height="17" fill="#fff" stroke="#1d3e6e"/><rect x="0.500" y="0.500" width="16" height="3.500" fill="#2f6fb5" stroke="#1d3e6e"/><rect x="2.500" y="6" width="3" height="2.400" fill="#8ab4e0" stroke="#1d3e6e" stroke-width="0.800"/><rect x="2.500" y="10" width="3" height="2.400" fill="#8ab4e0" stroke="#1d3e6e" stroke-width="0.800"/><rect x="2.500" y="14" width="3" height="2.400" fill="#8ab4e0" stroke="#1d3e6e" stroke-width="0.800"/><path d="M7.500 7.200H14.500M7.500 11.200H14.500M7.500 15.200H14.500" stroke="#1d3e6e" stroke-width="1.400"/></g>
 <!-- forum -->
 <g transform="translate(0,180)"><path d="M8.500 7.500 H20.500 V15.500 H14 L11 18.500 V15.500 H8.500 Z" fill="#4b8fd0" stroke="#1d3e6e" stroke-width="1"/><path d="M15.500 12.500 H26.500 V20.500 H24 V23.500 L21 20.500 H15.500 Z" fill="#f4f4f4" stroke="#333" stroke-width="1"/></g>
</svg>
<!-- triad -->
<svg style="position:absolute;left:276px;top:750px" width="70" height="70" viewBox="276 750 70 70">
 <text x="319.500" y="764" font-family="Liberation Sans, sans-serif" font-size="12" fill="#1c7a1c">Y</text>
 <text x="280" y="803" font-family="Liberation Sans, sans-serif" font-size="12" fill="#1a1acc">Z</text>
 <text x="304.500" y="815" font-family="Liberation Sans, sans-serif" font-size="10" fill="#e0301c">X</text>
 <path d="M300 796 L289.500 800.500 L300 806.500 Z" fill="#1414b8"/><path d="M299 799 L322 801.500 L322 805.500 L299 803.500Z" fill="#1a1ad0"/><ellipse cx="299.500" cy="801.300" rx="1.800" ry="5.200" fill="#0e0e90"/>
 <circle cx="314" cy="807.500" r="5" fill="#d8261a"/>
 <ellipse cx="321.500" cy="803.500" rx="4.500" ry="3.500" fill="#b02014"/>
 <rect x="321.700" y="778" width="4.600" height="25" fill="#1f8a1f"/><path d="M321.700 778 h2 v25 h-2z" fill="#167016"/>
 <path d="M318.500 779.500 L324.800 767.500 L330.800 779.500 Z" fill="#1f8a1f"/><ellipse cx="324.700" cy="779.500" rx="6.100" ry="1.600" fill="#146414"/>
</svg>
<!-- cursor -->
<svg style="position:absolute;left:432px;top:519px" width="18" height="24" viewBox="0 0 18 24"><path d="M2.500 2 L2.500 18 L6.300 14.500 L9 21 L11.500 20 L8.800 13.700 L14 13.500 Z" fill="#fff" stroke="#111" stroke-width="1.100" stroke-linejoin="round"/></svg>

</body></html>
